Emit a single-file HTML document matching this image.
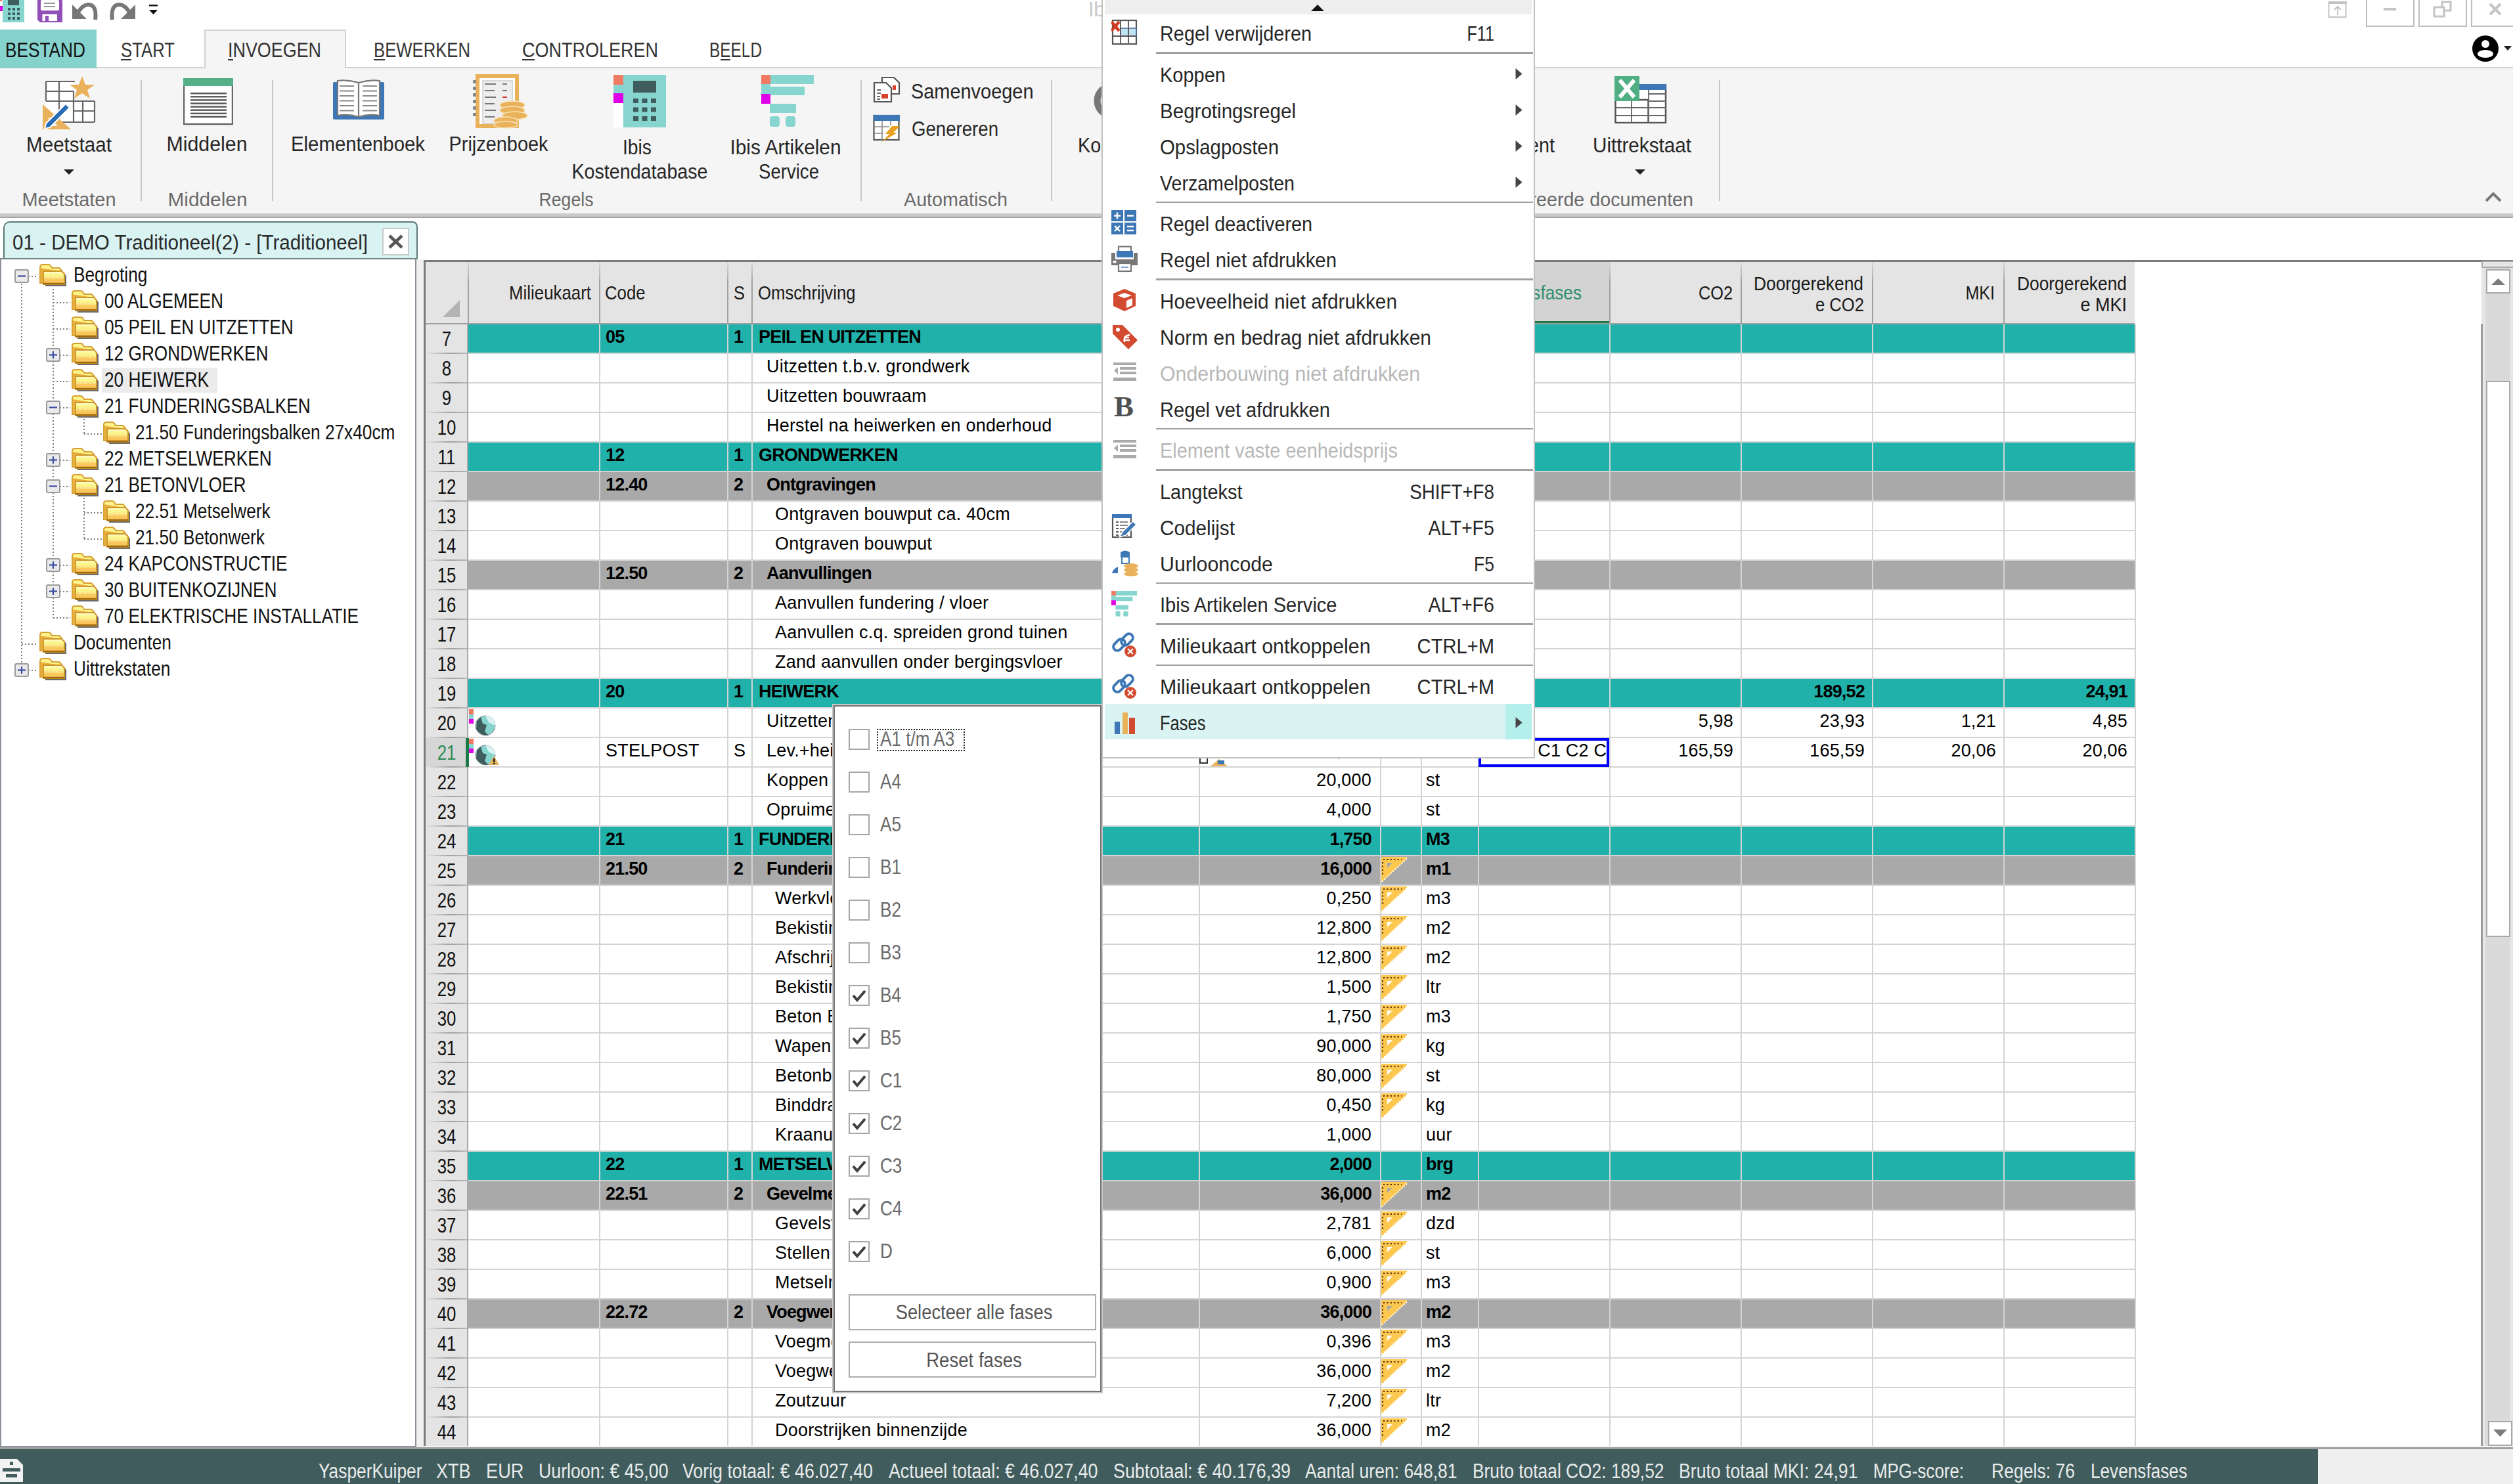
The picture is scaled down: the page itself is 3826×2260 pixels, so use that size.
<!DOCTYPE html>
<html><head><meta charset="utf-8"><title>Ibis</title>
<style>
html,body{margin:0;padding:0;background:#fff;overflow:hidden;}
body{width:3826px;height:2260px;position:relative;font-family:"Liberation Sans", sans-serif;}
#app{position:absolute;left:0;top:0;width:3826px;height:2260px;overflow:hidden;}
#app div{position:absolute;}
</style></head><body><div id="app">
<div style="left:0px;top:0px;width:3826px;height:45px;background:#ffffff;"></div>
<svg style="position:absolute;left:0px;top:0px;" width="40" height="36" viewBox="0 0 40 36"><rect x="0" y="0" width="3" height="2" fill="#f07a62"/><rect x="0" y="9" width="4" height="8" fill="#e000e8"/><rect x="4" y="0" width="33" height="34" fill="#86d5cf"/><rect x="12" y="0" width="17" height="8" fill="#3f5d5d"/><rect x="12" y="12" width="4" height="4" fill="#3f5d5d"/><rect x="19" y="12" width="4" height="4" fill="#3f5d5d"/><rect x="26" y="12" width="4" height="4" fill="#3f5d5d"/><rect x="12" y="19" width="4" height="4" fill="#3f5d5d"/><rect x="19" y="19" width="4" height="4" fill="#3f5d5d"/><rect x="26" y="19" width="4" height="4" fill="#3f5d5d"/><rect x="12" y="26" width="4" height="4" fill="#3f5d5d"/><rect x="19" y="26" width="4" height="4" fill="#3f5d5d"/><rect x="26" y="26" width="4" height="4" fill="#3f5d5d"/></svg>
<svg style="position:absolute;left:56px;top:0px;" width="40" height="36" viewBox="0 0 40 36"><path d="M1 0 H39 V34 H5 L1 30 Z" fill="#9050b8"/><rect x="6" y="0" width="28" height="16" rx="2" fill="#fff"/><rect x="11" y="4" width="17" height="2" fill="#999"/><rect x="11" y="9" width="17" height="2" fill="#999"/><rect x="8.5" y="21.5" width="22.5" height="10.5" fill="#fff"/><rect x="13" y="24" width="5" height="8" fill="#9050b8"/></svg>
<svg style="position:absolute;left:108px;top:4px;" width="44" height="28" viewBox="0 0 44 28"><path d="M2 3 L2 25 L24 25 Z" fill="#777"/><path d="M37 26 Q40 3 26 3 Q18 3 10 16" fill="none" stroke="#777" stroke-width="6"/></svg>
<svg style="position:absolute;left:164px;top:4px;" width="44" height="28" viewBox="0 0 44 28"><path d="M42 3 L42 25 L20 25 Z" fill="#777"/><path d="M7 26 Q4 3 18 3 Q26 3 34 16" fill="none" stroke="#777" stroke-width="6"/></svg>
<svg style="position:absolute;left:224px;top:6px;" width="18" height="18" viewBox="0 0 18 18"><rect x="3" y="1" width="13" height="2.5" fill="#111"/><path d="M3 9 H16 L9.5 16 Z" fill="#111"/></svg>
<div style="top:-1.25px;font-size:31.0px;line-height:31.0px;color:#c8c8c8;white-space:nowrap;left:1657px;transform:scaleX(0.967741935483871);transform-origin:0 0;">Ibis Begroting</div>
<svg style="position:absolute;left:3544px;top:1px;" width="30" height="27" viewBox="0 0 30 27"><rect x="1.5" y="2" width="26" height="23" fill="none" stroke="#c4c4c4" stroke-width="2"/><rect x="1" y="1" width="28" height="4" fill="#c4c4c4"/><path d="M15 22 V9 M10 14 L15 9 L20 14" fill="none" stroke="#c4c4c4" stroke-width="2"/></svg>
<div style="left:3602px;top:-4px;width:74px;height:45px;border:2.5px solid #bdbdbd;box-sizing:border-box;background:#fff;"></div>
<div style="left:3682px;top:-4px;width:74px;height:45px;border:2.5px solid #bdbdbd;box-sizing:border-box;background:#fff;"></div>
<div style="left:3762px;top:-4px;width:74px;height:45px;border:2.5px solid #bdbdbd;box-sizing:border-box;background:#fff;"></div>
<div style="left:3629px;top:12px;width:19px;height:4px;background:#c4c4c4;"></div>
<svg style="position:absolute;left:3704px;top:0px;" width="30" height="28" viewBox="0 0 30 28"><rect x="14" y="3" width="13" height="13" fill="none" stroke="#c4c4c4" stroke-width="3"/><rect x="2" y="11" width="15" height="14" fill="#fff" stroke="#c4c4c4" stroke-width="3"/></svg>
<svg style="position:absolute;left:3788px;top:3px;" width="22" height="22" viewBox="0 0 22 22"><path d="M3 3 L19 19 M19 3 L3 19" stroke="#c4c4c4" stroke-width="4"/></svg>
<svg style="position:absolute;left:3762px;top:52px;" width="64" height="44" viewBox="0 0 64 44"><circle cx="22" cy="22" r="20" fill="#000"/><circle cx="22" cy="15" r="6" fill="#fff"/><ellipse cx="22" cy="30" rx="12" ry="6" fill="#fff"/><path d="M50 18 H62 L56 25 Z" fill="#222"/></svg>
<div style="left:0px;top:45px;width:147px;height:59px;background:#86d3cd;"></div>
<div style="top:60.75px;font-size:31.0px;line-height:31.0px;color:#111;white-space:nowrap;left:8px;transform:scaleX(0.8464970600814514);transform-origin:0 0;">BESTAND</div>
<div style="left:147px;top:102px;width:3679px;height:2px;background:#d2d2d2;"></div>
<div style="left:311px;top:45px;width:216px;height:59px;background:#f5f5f5;border:2px solid #d2d2d2;border-bottom:none;box-sizing:border-box;"></div>
<div style="top:60.75px;font-size:31.0px;line-height:31.0px;color:#333;white-space:nowrap;left:184px;transform:scaleX(0.830322596466857);transform-origin:0 0;">START</div>
<div style="top:60.75px;font-size:31.0px;line-height:31.0px;color:#333;white-space:nowrap;left:347px;transform:scaleX(0.867726181212315);transform-origin:0 0;">INVOEGEN</div>
<div style="top:60.75px;font-size:31.0px;line-height:31.0px;color:#333;white-space:nowrap;left:569px;transform:scaleX(0.8285231056054325);transform-origin:0 0;">BEWERKEN</div>
<div style="top:60.75px;font-size:31.0px;line-height:31.0px;color:#333;white-space:nowrap;left:795px;transform:scaleX(0.8708553353364935);transform-origin:0 0;">CONTROLEREN</div>
<div style="top:60.75px;font-size:31.0px;line-height:31.0px;color:#333;white-space:nowrap;left:1080px;transform:scaleX(0.7869132635613819);transform-origin:0 0;">BEELD</div>
<div style="left:184px;top:90px;width:16px;height:2px;background:#333;"></div>
<div style="left:347px;top:90px;width:8px;height:2px;background:#333;"></div>
<div style="left:569px;top:90px;width:17px;height:2px;background:#333;"></div>
<div style="left:795px;top:90px;width:19px;height:2px;background:#333;"></div>
<div style="left:1097px;top:90px;width:15px;height:2px;background:#333;"></div>
<div style="left:0px;top:104px;width:3826px;height:221px;background:#f5f5f5;"></div>
<div style="left:0px;top:325px;width:3826px;height:5px;background:#c9c9c9;"></div>
<div style="left:0px;top:330px;width:3826px;height:2px;background:#a3a3a3;"></div>
<div style="left:214px;top:122px;width:2px;height:184px;background:#c6c6c6;"></div>
<div style="left:414px;top:122px;width:2px;height:184px;background:#c6c6c6;"></div>
<div style="left:1310px;top:122px;width:2px;height:184px;background:#c6c6c6;"></div>
<div style="left:1600px;top:122px;width:2px;height:184px;background:#c6c6c6;"></div>
<div style="left:2617px;top:122px;width:2px;height:184px;background:#c6c6c6;"></div>
<svg style="position:absolute;left:64px;top:116px;" width="82" height="82" viewBox="0 0 82 82"><rect x="6" y="8" width="44" height="62" fill="#fff"/><rect x="6" y="38" width="74" height="32" fill="#fff"/>
<path d="M6 8 H50 M6 23 H48 M6 38 H48 M6 38 V8 M26 8 V70 M48 23 V70 M62 38 V70 M80 38 V70 M48 53 H80 M26 70 H80 M48 38 H80" stroke="#666" stroke-width="2.2" fill="none"/>
<path d="M61 0 L66 13 L80 13 L69 21 L73 34 L61 26 L49 34 L53 21 L42 13 L56 13 Z" fill="#e9b15a"/>
<path d="M1 43 L1 81 L44 81 Z" fill="#e9b15a"/><path d="M10 62 L10 76 L24 76 Z" fill="#f4f4f4"/>
<path d="M6 72 L36 42 L42 48 L12 78 L4 80 Z" fill="#2a6bb5" stroke="#fff" stroke-width="2"/></svg>
<div style="top:204.75px;font-size:31.0px;line-height:31.0px;color:#262626;white-space:nowrap;left:-1395px;width:3000px;text-align:center;transform:scaleX(0.9549952738064426);transform-origin:50% 0;">Meetstaat</div>
<svg style="position:absolute;left:97px;top:258px;" width="16" height="9" viewBox="0 0 16 9"><path d="M0 0 H16 L8 8 Z" fill="#222"/></svg>
<svg style="position:absolute;left:279px;top:119px;" width="76" height="72" viewBox="0 0 76 72"><rect x="1" y="1" width="74" height="69" fill="#fff" stroke="#666" stroke-width="2.5"/><rect x="0" y="0" width="76" height="12" fill="#55b08a"/><rect x="11" y="22.0" width="55" height="2.4" fill="#555"/><rect x="11" y="27.1" width="55" height="2.4" fill="#555"/><rect x="11" y="32.2" width="55" height="2.4" fill="#555"/><rect x="11" y="37.3" width="55" height="2.4" fill="#555"/><rect x="11" y="42.4" width="55" height="2.4" fill="#555"/><rect x="11" y="47.5" width="55" height="2.4" fill="#555"/><rect x="11" y="52.6" width="55" height="2.4" fill="#555"/><rect x="11" y="57.7" width="55" height="2.4" fill="#555"/></svg>
<div style="top:203.75px;font-size:31.0px;line-height:31.0px;color:#262626;white-space:nowrap;left:-1185.5px;width:3000px;text-align:center;transform:scaleX(0.9776902316673767);transform-origin:50% 0;">Middelen</div>
<svg style="position:absolute;left:506px;top:120px;" width="80" height="64" viewBox="0 0 80 64"><rect x="1" y="5" width="78" height="57" rx="2" fill="#3d77b6"/><path d="M8 3 Q24 1 40 6 Q56 1 72 3 V56 Q56 53 40 58 Q24 53 8 56 Z" fill="#fff" stroke="#777" stroke-width="2.2"/><path d="M40 6 V58" stroke="#777" stroke-width="2.2"/><rect x="11" y="10.0" width="22" height="2" fill="#888"/><rect x="46" y="10.0" width="22" height="2" fill="#888"/><rect x="11" y="17.5" width="22" height="2" fill="#888"/><rect x="46" y="17.5" width="22" height="2" fill="#888"/><rect x="11" y="25.0" width="22" height="2" fill="#888"/><rect x="46" y="25.0" width="22" height="2" fill="#888"/><rect x="11" y="32.5" width="22" height="2" fill="#888"/><rect x="46" y="32.5" width="22" height="2" fill="#888"/><rect x="11" y="40.0" width="22" height="2" fill="#888"/><rect x="46" y="40.0" width="22" height="2" fill="#888"/><rect x="11" y="47.5" width="22" height="2" fill="#888"/><rect x="46" y="47.5" width="22" height="2" fill="#888"/></svg>
<div style="top:203.75px;font-size:31.0px;line-height:31.0px;color:#262626;white-space:nowrap;left:-955.5px;width:3000px;text-align:center;transform:scaleX(0.946929930013784);transform-origin:50% 0;">Elementenboek</div>
<svg style="position:absolute;left:718px;top:112px;" width="86" height="84" viewBox="0 0 86 84"><rect x="9" y="4" width="60" height="76" fill="#fff" stroke="#e9b15a" stroke-width="6"/>
<rect x="17" y="11" width="45" height="65" fill="#eee" stroke="#ccc" stroke-width="1.5"/>
<rect x="20" y="15" width="17" height="2" fill="#777"/><rect x="47" y="15" width="7" height="2" fill="#777"/><rect x="20" y="25" width="15" height="2" fill="#777"/><rect x="47" y="25" width="7" height="2" fill="#777"/><rect x="20" y="35" width="17" height="2" fill="#777"/><rect x="47" y="35" width="7" height="2" fill="#d33"/><rect x="20" y="45" width="15" height="2" fill="#777"/><rect x="47" y="45" width="7" height="2" fill="#777"/><rect x="20" y="55" width="17" height="2" fill="#777"/><rect x="47" y="55" width="7" height="2" fill="#777"/><rect x="20" y="65" width="15" height="2" fill="#777"/><rect x="47" y="65" width="7" height="2" fill="#777"/><rect x="2" y="10" width="5" height="5" fill="#888"/><rect x="2" y="20" width="5" height="5" fill="#888"/><rect x="2" y="30" width="5" height="5" fill="#888"/><rect x="2" y="40" width="5" height="5" fill="#888"/><rect x="2" y="50" width="5" height="5" fill="#888"/><rect x="2" y="60" width="5" height="5" fill="#888"/>
<ellipse cx="62" cy="48" rx="19" ry="6" fill="#e9b15a" stroke="#f8e3b8" stroke-width="1.5"/><ellipse cx="62" cy="56" rx="19" ry="6" fill="#e9b15a" stroke="#f8e3b8" stroke-width="1.5"/><ellipse cx="66" cy="64" rx="19" ry="6" fill="#e9b15a" stroke="#f8e3b8" stroke-width="1.5"/><ellipse cx="52" cy="72" rx="18" ry="6" fill="#e9b15a" stroke="#f8e3b8" stroke-width="1.5"/><ellipse cx="52" cy="78" rx="18" ry="5" fill="#e9b15a" stroke="#f8e3b8" stroke-width="1.5"/></svg>
<div style="top:203.75px;font-size:31.0px;line-height:31.0px;color:#262626;white-space:nowrap;left:-741.5px;width:3000px;text-align:center;transform:scaleX(0.9321868772318371);transform-origin:50% 0;">Prijzenboek</div>
<svg style="position:absolute;left:934px;top:114px;" width="80" height="80" viewBox="0 0 80 80"><rect x="0" y="0" width="15" height="15" fill="#f07a62"/><rect x="0" y="15" width="15" height="13" fill="#86d5cf"/><rect x="0" y="28" width="15" height="15" fill="#e000e8"/><rect x="0" y="43" width="15" height="37" fill="#fff"/><rect x="15" y="0" width="65" height="80" fill="#86d5cf"/><rect x="30" y="9" width="35" height="18" fill="#3f5d5d"/><rect x="30.0" y="36.0" width="8" height="7" fill="#3f5d5d"/><rect x="43.5" y="36.0" width="8" height="7" fill="#3f5d5d"/><rect x="57.0" y="36.0" width="8" height="7" fill="#3f5d5d"/><rect x="30.0" y="49.5" width="8" height="7" fill="#3f5d5d"/><rect x="43.5" y="49.5" width="8" height="7" fill="#3f5d5d"/><rect x="57.0" y="49.5" width="8" height="7" fill="#3f5d5d"/><rect x="30.0" y="63.0" width="8" height="7" fill="#3f5d5d"/><rect x="43.5" y="63.0" width="8" height="7" fill="#3f5d5d"/><rect x="57.0" y="63.0" width="8" height="7" fill="#3f5d5d"/></svg>
<div style="top:208.75px;font-size:31.0px;line-height:31.0px;color:#262626;white-space:nowrap;left:-530px;width:3000px;text-align:center;transform:scaleX(0.9120810249251403);transform-origin:50% 0;">Ibis</div>
<div style="top:245.75px;font-size:31.0px;line-height:31.0px;color:#262626;white-space:nowrap;left:-526.5px;width:3000px;text-align:center;transform:scaleX(0.9238007343406955);transform-origin:50% 0;">Kostendatabase</div>
<svg style="position:absolute;left:1159px;top:114px;" width="81" height="81" viewBox="0 0 81 81"><g transform="scale(1.0)"><rect x="13" y="0" width="67" height="14" fill="#86d5cf"/><rect x="0" y="0" width="14" height="14" fill="#f07a62"/><rect x="0" y="14" width="14" height="15" fill="#86d5cf"/><rect x="13" y="18" width="53" height="13" fill="#86d5cf"/><rect x="0" y="29" width="14" height="15" fill="#e000e8"/><rect x="13" y="44" width="40" height="14" fill="#86d5cf"/><rect x="13" y="63" width="15" height="16" rx="4" fill="#86d5cf"/><rect x="37" y="63" width="15" height="16" rx="4" fill="#86d5cf"/></g></svg>
<div style="top:208.75px;font-size:31.0px;line-height:31.0px;color:#262626;white-space:nowrap;left:-304px;width:3000px;text-align:center;transform:scaleX(0.9615500015335372);transform-origin:50% 0;">Ibis Artikelen</div>
<div style="top:245.75px;font-size:31.0px;line-height:31.0px;color:#262626;white-space:nowrap;left:-299px;width:3000px;text-align:center;transform:scaleX(0.8899818844550184);transform-origin:50% 0;">Service</div>
<svg style="position:absolute;left:1329px;top:116px;" width="42" height="42" viewBox="0 0 42 42"><path d="M14 2 H32 L40 10 V27 H14 Z" fill="#fff" stroke="#555" stroke-width="2.2"/><rect x="30" y="14" width="5" height="7" fill="#d84030"/><path d="M2 10 H20 L28 18 V39 H2 Z" fill="#fff" stroke="#555" stroke-width="2.2"/><rect x="6" y="20" width="6" height="2" fill="#666"/><rect x="6" y="25" width="6" height="2" fill="#666"/><rect x="6" y="30" width="5" height="2" fill="#666"/><rect x="6" y="34" width="5" height="2" fill="#666"/><rect x="13" y="27" width="10" height="7" fill="#d84030"/></svg>
<div style="top:123.75px;font-size:31.0px;line-height:31.0px;color:#262626;white-space:nowrap;left:1387px;transform:scaleX(0.9328122734837404);transform-origin:0 0;">Samenvoegen</div>
<svg style="position:absolute;left:1329px;top:174px;" width="42" height="42" viewBox="0 0 42 42"><rect x="1.5" y="2" width="38" height="37" fill="#fff" stroke="#555" stroke-width="2.2"/><rect x="1" y="1" width="40" height="9" fill="#3d77b6"/><path d="M1.5 19 H25 M1.5 29 H15 M14 10 V39 M27 10 V17" stroke="#888" stroke-width="1.6"/><path d="M29 18 L41 18 L31 28 L37 28 L14 42 L25 30 L19 30 Z" fill="#e8a020"/></svg>
<div style="top:180.75px;font-size:31.0px;line-height:31.0px;color:#262626;white-space:nowrap;left:1388px;transform:scaleX(0.8906337964319828);transform-origin:0 0;">Genereren</div>
<svg style="position:absolute;left:1664px;top:124px;" width="60" height="60" viewBox="0 0 60 60"><circle cx="29" cy="29.5" r="22.5" fill="none" stroke="#777" stroke-width="10"/></svg>
<div style="top:205.75px;font-size:31.0px;line-height:31.0px;color:#262626;white-space:nowrap;left:1641px;transform:scaleX(0.9290322580645161);transform-origin:0 0;">Koppelen</div>
<div style="top:288.60px;font-size:30.0px;line-height:30.0px;color:#6a6a6a;white-space:nowrap;left:-1395.5px;width:3000px;text-align:center;transform:scaleX(0.9634799818926403);transform-origin:50% 0;">Meetstaten</div>
<div style="top:288.60px;font-size:30.0px;line-height:30.0px;color:#6a6a6a;white-space:nowrap;left:-1184.5px;width:3000px;text-align:center;transform:scaleX(0.9938525905106586);transform-origin:50% 0;">Middelen</div>
<div style="top:288.60px;font-size:30.0px;line-height:30.0px;color:#6a6a6a;white-space:nowrap;left:-638.5px;width:3000px;text-align:center;transform:scaleX(0.8887773455473292);transform-origin:50% 0;">Regels</div>
<div style="top:288.60px;font-size:30.0px;line-height:30.0px;color:#6a6a6a;white-space:nowrap;left:-45.5px;width:3000px;text-align:center;transform:scaleX(0.9571271042456424);transform-origin:50% 0;">Automatisch</div>
<div style="top:288.60px;font-size:30.0px;line-height:30.0px;color:#6a6a6a;white-space:nowrap;left:-422px;width:3000px;text-align:right;transform:scaleX(0.9552805543325185);transform-origin:100% 0;">Gegenereerde documenten</div>
<div style="top:205.75px;font-size:31.0px;line-height:31.0px;color:#262626;white-space:nowrap;left:-633px;width:3000px;text-align:right;transform:scaleX(0.9290322580645161);transform-origin:100% 0;">Document</div>
<svg style="position:absolute;left:2458px;top:116px;" width="80" height="72" viewBox="0 0 80 72"><rect x="28" y="14" width="50" height="57" fill="#fff" stroke="#555" stroke-width="2.5"/><rect x="28" y="12" width="51" height="9" fill="#3d77b6"/><rect x="1.5" y="36" width="50" height="35" fill="#fff" stroke="#555" stroke-width="2.5"/><path d="M1.5 48 H78 M1.5 60 H78 M26 36 V71 M52 21 V71 M52 27 H78 M52 38 H78" stroke="#666" stroke-width="1.8"/><rect x="0" y="0" width="38" height="38" fill="#4fae82"/><path d="M8 6 L30 32 M30 6 L8 32" stroke="#fff" stroke-width="6"/></svg>
<div style="top:205.75px;font-size:31.0px;line-height:31.0px;color:#262626;white-space:nowrap;left:999.5px;width:3000px;text-align:center;transform:scaleX(0.956798552044858);transform-origin:50% 0;">Uittrekstaat</div>
<svg style="position:absolute;left:2489px;top:258px;" width="16" height="9" viewBox="0 0 16 9"><path d="M0 0 H16 L8 8 Z" fill="#222"/></svg>
<svg style="position:absolute;left:3783px;top:292px;" width="26" height="16" viewBox="0 0 26 16"><path d="M2 14 L13 3 L24 14" fill="none" stroke="#777" stroke-width="4"/></svg>
<div style="left:0px;top:332px;width:3826px;height:66px;background:#ffffff;"></div>
<div style="left:5px;top:337px;width:631px;height:59px;background:#d9f3f3;border:2px solid #5d7777;border-bottom:none;border-radius:10px 8px 0 0;box-sizing:border-box;"></div>
<div style="top:353.75px;font-size:31.0px;line-height:31.0px;color:#2a2a2a;white-space:nowrap;left:19px;transform:scaleX(0.9534406018263356);transform-origin:0 0;">01 - DEMO Traditioneel(2) - [Traditioneel]</div>
<div style="left:582px;top:347px;width:41px;height:42px;background:#fff;border:2px solid #c9c9c9;box-sizing:border-box;"></div>
<svg style="position:absolute;left:590px;top:356px;" width="25" height="24" viewBox="0 0 25 24"><path d="M3 3 L22 21 M22 3 L3 21" stroke="#555" stroke-width="4.5"/></svg>
<div style="left:0px;top:393px;width:636px;height:2px;background:#6d8585;"></div>
<div style="left:0px;top:395px;width:634px;height:1809px;background:#ffffff;border:2px solid #8c919b;border-top:none;box-sizing:border-box;"></div>
<div style="left:634px;top:395px;width:11px;height:1809px;background:#f0f0f0;"></div>
<svg width="0" height="0" style="position:absolute"><defs><linearGradient id="fg" x1="0" y1="0" x2="0" y2="1"><stop offset="0" stop-color="#fffbe0"/><stop offset="0.25" stop-color="#fbf78e"/><stop offset="0.55" stop-color="#f9ec80"/><stop offset="0.6" stop-color="#fbc860"/><stop offset="1" stop-color="#f8c458"/></linearGradient></defs></svg>
<div style="left:32px;top:432px;width:2px;height:578px;background-image:linear-gradient(#7a7a7a 50%, transparent 50%);background-size:2px 5px;"></div>
<div style="left:80px;top:440px;width:2px;height:501px;background-image:linear-gradient(#7a7a7a 50%, transparent 50%);background-size:2px 5px;"></div>
<div style="left:127px;top:638px;width:2px;height:23px;background-image:linear-gradient(#7a7a7a 50%, transparent 50%);background-size:2px 5px;"></div>
<div style="left:127px;top:758px;width:2px;height:63px;background-image:linear-gradient(#7a7a7a 50%, transparent 50%);background-size:2px 5px;"></div>
<div style="left:33px;top:420px;width:25px;height:2px;background-image:linear-gradient(90deg,#7a7a7a 50%, transparent 50%);background-size:5px 2px;"></div>
<svg style="position:absolute;left:22px;top:410px;" width="22" height="22" viewBox="0 0 22 22"><rect x="1" y="1" width="20" height="19" rx="2" fill="#eaeaea" stroke="#9a9a9a" stroke-width="2"/><path d="M5 10.5 H17" stroke="#3a4ea0" stroke-width="2.2"/></svg>
<svg style="position:absolute;left:59px;top:401px;" width="44" height="36" viewBox="0 0 44 36"><path d="M10 15 H38 L42 19 V35 H10 Z" fill="#5a5a5a" opacity="0.9"/><path d="M2 6 Q2 2 6 2 H15 Q17 2 19 5 L20 7 H31 L35 11 V30 H2 Z" fill="#fcf48a" stroke="#d8a030" stroke-width="2"/><path d="M2 7 V30 H8 V12 H33" fill="#eab040" stroke="#d8a030" stroke-width="1.5"/><path d="M7 12 H35 L39 16 V32 H7 Z" fill="url(#fg)" stroke="#cf9628" stroke-width="2"/><path d="M7 31 H39" stroke="#a06a10" stroke-width="2.5"/><path d="M10 22 H36" stroke="#ffc8a0" stroke-width="1.6" stroke-dasharray="3 4"/></svg>
<div style="top:402.57px;font-size:31.8px;line-height:31.8px;color:#111;white-space:nowrap;left:112px;transform:scaleX(0.8254716981132075);transform-origin:0 0;">Begroting</div>
<div style="left:81px;top:460px;width:26px;height:2px;background-image:linear-gradient(90deg,#7a7a7a 50%, transparent 50%);background-size:5px 2px;"></div>
<svg style="position:absolute;left:108px;top:441px;" width="44" height="36" viewBox="0 0 44 36"><path d="M10 15 H38 L42 19 V35 H10 Z" fill="#5a5a5a" opacity="0.9"/><path d="M2 6 Q2 2 6 2 H15 Q17 2 19 5 L20 7 H31 L35 11 V30 H2 Z" fill="#fcf48a" stroke="#d8a030" stroke-width="2"/><path d="M2 7 V30 H8 V12 H33" fill="#eab040" stroke="#d8a030" stroke-width="1.5"/><path d="M7 12 H35 L39 16 V32 H7 Z" fill="url(#fg)" stroke="#cf9628" stroke-width="2"/><path d="M7 31 H39" stroke="#a06a10" stroke-width="2.5"/><path d="M10 22 H36" stroke="#ffc8a0" stroke-width="1.6" stroke-dasharray="3 4"/></svg>
<div style="top:442.57px;font-size:31.8px;line-height:31.8px;color:#111;white-space:nowrap;left:159px;transform:scaleX(0.8254716981132075);transform-origin:0 0;">00 ALGEMEEN</div>
<div style="left:81px;top:500px;width:26px;height:2px;background-image:linear-gradient(90deg,#7a7a7a 50%, transparent 50%);background-size:5px 2px;"></div>
<svg style="position:absolute;left:108px;top:481px;" width="44" height="36" viewBox="0 0 44 36"><path d="M10 15 H38 L42 19 V35 H10 Z" fill="#5a5a5a" opacity="0.9"/><path d="M2 6 Q2 2 6 2 H15 Q17 2 19 5 L20 7 H31 L35 11 V30 H2 Z" fill="#fcf48a" stroke="#d8a030" stroke-width="2"/><path d="M2 7 V30 H8 V12 H33" fill="#eab040" stroke="#d8a030" stroke-width="1.5"/><path d="M7 12 H35 L39 16 V32 H7 Z" fill="url(#fg)" stroke="#cf9628" stroke-width="2"/><path d="M7 31 H39" stroke="#a06a10" stroke-width="2.5"/><path d="M10 22 H36" stroke="#ffc8a0" stroke-width="1.6" stroke-dasharray="3 4"/></svg>
<div style="top:482.57px;font-size:31.8px;line-height:31.8px;color:#111;white-space:nowrap;left:159px;transform:scaleX(0.8254716981132075);transform-origin:0 0;">05 PEIL EN UITZETTEN</div>
<div style="left:81px;top:540px;width:26px;height:2px;background-image:linear-gradient(90deg,#7a7a7a 50%, transparent 50%);background-size:5px 2px;"></div>
<svg style="position:absolute;left:70px;top:530px;" width="22" height="22" viewBox="0 0 22 22"><rect x="1" y="1" width="20" height="19" rx="2" fill="#eaeaea" stroke="#9a9a9a" stroke-width="2"/><path d="M5 10.5 H17" stroke="#3a4ea0" stroke-width="2.2"/><path d="M11 5 V16" stroke="#3a4ea0" stroke-width="2.2"/></svg>
<svg style="position:absolute;left:108px;top:521px;" width="44" height="36" viewBox="0 0 44 36"><path d="M10 15 H38 L42 19 V35 H10 Z" fill="#5a5a5a" opacity="0.9"/><path d="M2 6 Q2 2 6 2 H15 Q17 2 19 5 L20 7 H31 L35 11 V30 H2 Z" fill="#fcf48a" stroke="#d8a030" stroke-width="2"/><path d="M2 7 V30 H8 V12 H33" fill="#eab040" stroke="#d8a030" stroke-width="1.5"/><path d="M7 12 H35 L39 16 V32 H7 Z" fill="url(#fg)" stroke="#cf9628" stroke-width="2"/><path d="M7 31 H39" stroke="#a06a10" stroke-width="2.5"/><path d="M10 22 H36" stroke="#ffc8a0" stroke-width="1.6" stroke-dasharray="3 4"/></svg>
<div style="top:522.57px;font-size:31.8px;line-height:31.8px;color:#111;white-space:nowrap;left:159px;transform:scaleX(0.8254716981132075);transform-origin:0 0;">12 GRONDWERKEN</div>
<div style="left:81px;top:580px;width:26px;height:2px;background-image:linear-gradient(90deg,#7a7a7a 50%, transparent 50%);background-size:5px 2px;"></div>
<div style="left:155px;top:560px;width:176px;height:38px;background:#ebebeb;"></div>
<svg style="position:absolute;left:108px;top:561px;" width="44" height="36" viewBox="0 0 44 36"><path d="M10 15 H38 L42 19 V35 H10 Z" fill="#5a5a5a" opacity="0.9"/><path d="M2 6 Q2 2 6 2 H15 Q17 2 19 5 L20 7 H31 L35 11 V30 H2 Z" fill="#fcf48a" stroke="#d8a030" stroke-width="2"/><path d="M2 7 V30 H8 V12 H33" fill="#eab040" stroke="#d8a030" stroke-width="1.5"/><path d="M7 12 H35 L39 16 V32 H7 Z" fill="url(#fg)" stroke="#cf9628" stroke-width="2"/><path d="M7 31 H39" stroke="#a06a10" stroke-width="2.5"/><path d="M10 22 H36" stroke="#ffc8a0" stroke-width="1.6" stroke-dasharray="3 4"/></svg>
<div style="top:562.57px;font-size:31.8px;line-height:31.8px;color:#111;white-space:nowrap;left:159px;transform:scaleX(0.8254716981132075);transform-origin:0 0;">20 HEIWERK</div>
<div style="left:81px;top:620px;width:26px;height:2px;background-image:linear-gradient(90deg,#7a7a7a 50%, transparent 50%);background-size:5px 2px;"></div>
<svg style="position:absolute;left:70px;top:610px;" width="22" height="22" viewBox="0 0 22 22"><rect x="1" y="1" width="20" height="19" rx="2" fill="#eaeaea" stroke="#9a9a9a" stroke-width="2"/><path d="M5 10.5 H17" stroke="#3a4ea0" stroke-width="2.2"/></svg>
<svg style="position:absolute;left:108px;top:601px;" width="44" height="36" viewBox="0 0 44 36"><path d="M10 15 H38 L42 19 V35 H10 Z" fill="#5a5a5a" opacity="0.9"/><path d="M2 6 Q2 2 6 2 H15 Q17 2 19 5 L20 7 H31 L35 11 V30 H2 Z" fill="#fcf48a" stroke="#d8a030" stroke-width="2"/><path d="M2 7 V30 H8 V12 H33" fill="#eab040" stroke="#d8a030" stroke-width="1.5"/><path d="M7 12 H35 L39 16 V32 H7 Z" fill="url(#fg)" stroke="#cf9628" stroke-width="2"/><path d="M7 31 H39" stroke="#a06a10" stroke-width="2.5"/><path d="M10 22 H36" stroke="#ffc8a0" stroke-width="1.6" stroke-dasharray="3 4"/></svg>
<div style="top:602.57px;font-size:31.8px;line-height:31.8px;color:#111;white-space:nowrap;left:159px;transform:scaleX(0.8254716981132075);transform-origin:0 0;">21 FUNDERINGSBALKEN</div>
<div style="left:128px;top:660px;width:27px;height:2px;background-image:linear-gradient(90deg,#7a7a7a 50%, transparent 50%);background-size:5px 2px;"></div>
<svg style="position:absolute;left:156px;top:641px;" width="44" height="36" viewBox="0 0 44 36"><path d="M10 15 H38 L42 19 V35 H10 Z" fill="#5a5a5a" opacity="0.9"/><path d="M2 6 Q2 2 6 2 H15 Q17 2 19 5 L20 7 H31 L35 11 V30 H2 Z" fill="#fcf48a" stroke="#d8a030" stroke-width="2"/><path d="M2 7 V30 H8 V12 H33" fill="#eab040" stroke="#d8a030" stroke-width="1.5"/><path d="M7 12 H35 L39 16 V32 H7 Z" fill="url(#fg)" stroke="#cf9628" stroke-width="2"/><path d="M7 31 H39" stroke="#a06a10" stroke-width="2.5"/><path d="M10 22 H36" stroke="#ffc8a0" stroke-width="1.6" stroke-dasharray="3 4"/></svg>
<div style="top:642.57px;font-size:31.8px;line-height:31.8px;color:#111;white-space:nowrap;left:206px;transform:scaleX(0.8254716981132075);transform-origin:0 0;">21.50 Funderingsbalken 27x40cm</div>
<div style="left:81px;top:700px;width:26px;height:2px;background-image:linear-gradient(90deg,#7a7a7a 50%, transparent 50%);background-size:5px 2px;"></div>
<svg style="position:absolute;left:70px;top:690px;" width="22" height="22" viewBox="0 0 22 22"><rect x="1" y="1" width="20" height="19" rx="2" fill="#eaeaea" stroke="#9a9a9a" stroke-width="2"/><path d="M5 10.5 H17" stroke="#3a4ea0" stroke-width="2.2"/><path d="M11 5 V16" stroke="#3a4ea0" stroke-width="2.2"/></svg>
<svg style="position:absolute;left:108px;top:681px;" width="44" height="36" viewBox="0 0 44 36"><path d="M10 15 H38 L42 19 V35 H10 Z" fill="#5a5a5a" opacity="0.9"/><path d="M2 6 Q2 2 6 2 H15 Q17 2 19 5 L20 7 H31 L35 11 V30 H2 Z" fill="#fcf48a" stroke="#d8a030" stroke-width="2"/><path d="M2 7 V30 H8 V12 H33" fill="#eab040" stroke="#d8a030" stroke-width="1.5"/><path d="M7 12 H35 L39 16 V32 H7 Z" fill="url(#fg)" stroke="#cf9628" stroke-width="2"/><path d="M7 31 H39" stroke="#a06a10" stroke-width="2.5"/><path d="M10 22 H36" stroke="#ffc8a0" stroke-width="1.6" stroke-dasharray="3 4"/></svg>
<div style="top:682.57px;font-size:31.8px;line-height:31.8px;color:#111;white-space:nowrap;left:159px;transform:scaleX(0.8254716981132075);transform-origin:0 0;">22 METSELWERKEN</div>
<div style="left:81px;top:740px;width:26px;height:2px;background-image:linear-gradient(90deg,#7a7a7a 50%, transparent 50%);background-size:5px 2px;"></div>
<svg style="position:absolute;left:70px;top:730px;" width="22" height="22" viewBox="0 0 22 22"><rect x="1" y="1" width="20" height="19" rx="2" fill="#eaeaea" stroke="#9a9a9a" stroke-width="2"/><path d="M5 10.5 H17" stroke="#3a4ea0" stroke-width="2.2"/></svg>
<svg style="position:absolute;left:108px;top:721px;" width="44" height="36" viewBox="0 0 44 36"><path d="M10 15 H38 L42 19 V35 H10 Z" fill="#5a5a5a" opacity="0.9"/><path d="M2 6 Q2 2 6 2 H15 Q17 2 19 5 L20 7 H31 L35 11 V30 H2 Z" fill="#fcf48a" stroke="#d8a030" stroke-width="2"/><path d="M2 7 V30 H8 V12 H33" fill="#eab040" stroke="#d8a030" stroke-width="1.5"/><path d="M7 12 H35 L39 16 V32 H7 Z" fill="url(#fg)" stroke="#cf9628" stroke-width="2"/><path d="M7 31 H39" stroke="#a06a10" stroke-width="2.5"/><path d="M10 22 H36" stroke="#ffc8a0" stroke-width="1.6" stroke-dasharray="3 4"/></svg>
<div style="top:722.57px;font-size:31.8px;line-height:31.8px;color:#111;white-space:nowrap;left:159px;transform:scaleX(0.8254716981132075);transform-origin:0 0;">21 BETONVLOER</div>
<div style="left:128px;top:780px;width:27px;height:2px;background-image:linear-gradient(90deg,#7a7a7a 50%, transparent 50%);background-size:5px 2px;"></div>
<svg style="position:absolute;left:156px;top:761px;" width="44" height="36" viewBox="0 0 44 36"><path d="M10 15 H38 L42 19 V35 H10 Z" fill="#5a5a5a" opacity="0.9"/><path d="M2 6 Q2 2 6 2 H15 Q17 2 19 5 L20 7 H31 L35 11 V30 H2 Z" fill="#fcf48a" stroke="#d8a030" stroke-width="2"/><path d="M2 7 V30 H8 V12 H33" fill="#eab040" stroke="#d8a030" stroke-width="1.5"/><path d="M7 12 H35 L39 16 V32 H7 Z" fill="url(#fg)" stroke="#cf9628" stroke-width="2"/><path d="M7 31 H39" stroke="#a06a10" stroke-width="2.5"/><path d="M10 22 H36" stroke="#ffc8a0" stroke-width="1.6" stroke-dasharray="3 4"/></svg>
<div style="top:762.57px;font-size:31.8px;line-height:31.8px;color:#111;white-space:nowrap;left:206px;transform:scaleX(0.8254716981132075);transform-origin:0 0;">22.51 Metselwerk</div>
<div style="left:128px;top:820px;width:27px;height:2px;background-image:linear-gradient(90deg,#7a7a7a 50%, transparent 50%);background-size:5px 2px;"></div>
<svg style="position:absolute;left:156px;top:801px;" width="44" height="36" viewBox="0 0 44 36"><path d="M10 15 H38 L42 19 V35 H10 Z" fill="#5a5a5a" opacity="0.9"/><path d="M2 6 Q2 2 6 2 H15 Q17 2 19 5 L20 7 H31 L35 11 V30 H2 Z" fill="#fcf48a" stroke="#d8a030" stroke-width="2"/><path d="M2 7 V30 H8 V12 H33" fill="#eab040" stroke="#d8a030" stroke-width="1.5"/><path d="M7 12 H35 L39 16 V32 H7 Z" fill="url(#fg)" stroke="#cf9628" stroke-width="2"/><path d="M7 31 H39" stroke="#a06a10" stroke-width="2.5"/><path d="M10 22 H36" stroke="#ffc8a0" stroke-width="1.6" stroke-dasharray="3 4"/></svg>
<div style="top:802.57px;font-size:31.8px;line-height:31.8px;color:#111;white-space:nowrap;left:206px;transform:scaleX(0.8254716981132075);transform-origin:0 0;">21.50 Betonwerk</div>
<div style="left:81px;top:860px;width:26px;height:2px;background-image:linear-gradient(90deg,#7a7a7a 50%, transparent 50%);background-size:5px 2px;"></div>
<svg style="position:absolute;left:70px;top:850px;" width="22" height="22" viewBox="0 0 22 22"><rect x="1" y="1" width="20" height="19" rx="2" fill="#eaeaea" stroke="#9a9a9a" stroke-width="2"/><path d="M5 10.5 H17" stroke="#3a4ea0" stroke-width="2.2"/><path d="M11 5 V16" stroke="#3a4ea0" stroke-width="2.2"/></svg>
<svg style="position:absolute;left:108px;top:841px;" width="44" height="36" viewBox="0 0 44 36"><path d="M10 15 H38 L42 19 V35 H10 Z" fill="#5a5a5a" opacity="0.9"/><path d="M2 6 Q2 2 6 2 H15 Q17 2 19 5 L20 7 H31 L35 11 V30 H2 Z" fill="#fcf48a" stroke="#d8a030" stroke-width="2"/><path d="M2 7 V30 H8 V12 H33" fill="#eab040" stroke="#d8a030" stroke-width="1.5"/><path d="M7 12 H35 L39 16 V32 H7 Z" fill="url(#fg)" stroke="#cf9628" stroke-width="2"/><path d="M7 31 H39" stroke="#a06a10" stroke-width="2.5"/><path d="M10 22 H36" stroke="#ffc8a0" stroke-width="1.6" stroke-dasharray="3 4"/></svg>
<div style="top:842.57px;font-size:31.8px;line-height:31.8px;color:#111;white-space:nowrap;left:159px;transform:scaleX(0.8254716981132075);transform-origin:0 0;">24 KAPCONSTRUCTIE</div>
<div style="left:81px;top:900px;width:26px;height:2px;background-image:linear-gradient(90deg,#7a7a7a 50%, transparent 50%);background-size:5px 2px;"></div>
<svg style="position:absolute;left:70px;top:890px;" width="22" height="22" viewBox="0 0 22 22"><rect x="1" y="1" width="20" height="19" rx="2" fill="#eaeaea" stroke="#9a9a9a" stroke-width="2"/><path d="M5 10.5 H17" stroke="#3a4ea0" stroke-width="2.2"/><path d="M11 5 V16" stroke="#3a4ea0" stroke-width="2.2"/></svg>
<svg style="position:absolute;left:108px;top:881px;" width="44" height="36" viewBox="0 0 44 36"><path d="M10 15 H38 L42 19 V35 H10 Z" fill="#5a5a5a" opacity="0.9"/><path d="M2 6 Q2 2 6 2 H15 Q17 2 19 5 L20 7 H31 L35 11 V30 H2 Z" fill="#fcf48a" stroke="#d8a030" stroke-width="2"/><path d="M2 7 V30 H8 V12 H33" fill="#eab040" stroke="#d8a030" stroke-width="1.5"/><path d="M7 12 H35 L39 16 V32 H7 Z" fill="url(#fg)" stroke="#cf9628" stroke-width="2"/><path d="M7 31 H39" stroke="#a06a10" stroke-width="2.5"/><path d="M10 22 H36" stroke="#ffc8a0" stroke-width="1.6" stroke-dasharray="3 4"/></svg>
<div style="top:882.57px;font-size:31.8px;line-height:31.8px;color:#111;white-space:nowrap;left:159px;transform:scaleX(0.8254716981132075);transform-origin:0 0;">30 BUITENKOZIJNEN</div>
<div style="left:81px;top:940px;width:26px;height:2px;background-image:linear-gradient(90deg,#7a7a7a 50%, transparent 50%);background-size:5px 2px;"></div>
<svg style="position:absolute;left:108px;top:921px;" width="44" height="36" viewBox="0 0 44 36"><path d="M10 15 H38 L42 19 V35 H10 Z" fill="#5a5a5a" opacity="0.9"/><path d="M2 6 Q2 2 6 2 H15 Q17 2 19 5 L20 7 H31 L35 11 V30 H2 Z" fill="#fcf48a" stroke="#d8a030" stroke-width="2"/><path d="M2 7 V30 H8 V12 H33" fill="#eab040" stroke="#d8a030" stroke-width="1.5"/><path d="M7 12 H35 L39 16 V32 H7 Z" fill="url(#fg)" stroke="#cf9628" stroke-width="2"/><path d="M7 31 H39" stroke="#a06a10" stroke-width="2.5"/><path d="M10 22 H36" stroke="#ffc8a0" stroke-width="1.6" stroke-dasharray="3 4"/></svg>
<div style="top:922.57px;font-size:31.8px;line-height:31.8px;color:#111;white-space:nowrap;left:159px;transform:scaleX(0.8254716981132075);transform-origin:0 0;">70 ELEKTRISCHE INSTALLATIE</div>
<div style="left:33px;top:980px;width:25px;height:2px;background-image:linear-gradient(90deg,#7a7a7a 50%, transparent 50%);background-size:5px 2px;"></div>
<svg style="position:absolute;left:59px;top:961px;" width="44" height="36" viewBox="0 0 44 36"><path d="M10 15 H38 L42 19 V35 H10 Z" fill="#5a5a5a" opacity="0.9"/><path d="M2 6 Q2 2 6 2 H15 Q17 2 19 5 L20 7 H31 L35 11 V30 H2 Z" fill="#fcf48a" stroke="#d8a030" stroke-width="2"/><path d="M2 7 V30 H8 V12 H33" fill="#eab040" stroke="#d8a030" stroke-width="1.5"/><path d="M7 12 H35 L39 16 V32 H7 Z" fill="url(#fg)" stroke="#cf9628" stroke-width="2"/><path d="M7 31 H39" stroke="#a06a10" stroke-width="2.5"/><path d="M10 22 H36" stroke="#ffc8a0" stroke-width="1.6" stroke-dasharray="3 4"/></svg>
<div style="top:962.57px;font-size:31.8px;line-height:31.8px;color:#111;white-space:nowrap;left:112px;transform:scaleX(0.8254716981132075);transform-origin:0 0;">Documenten</div>
<div style="left:33px;top:1020px;width:25px;height:2px;background-image:linear-gradient(90deg,#7a7a7a 50%, transparent 50%);background-size:5px 2px;"></div>
<svg style="position:absolute;left:22px;top:1010px;" width="22" height="22" viewBox="0 0 22 22"><rect x="1" y="1" width="20" height="19" rx="2" fill="#eaeaea" stroke="#9a9a9a" stroke-width="2"/><path d="M5 10.5 H17" stroke="#3a4ea0" stroke-width="2.2"/><path d="M11 5 V16" stroke="#3a4ea0" stroke-width="2.2"/></svg>
<svg style="position:absolute;left:59px;top:1001px;" width="44" height="36" viewBox="0 0 44 36"><path d="M10 15 H38 L42 19 V35 H10 Z" fill="#5a5a5a" opacity="0.9"/><path d="M2 6 Q2 2 6 2 H15 Q17 2 19 5 L20 7 H31 L35 11 V30 H2 Z" fill="#fcf48a" stroke="#d8a030" stroke-width="2"/><path d="M2 7 V30 H8 V12 H33" fill="#eab040" stroke="#d8a030" stroke-width="1.5"/><path d="M7 12 H35 L39 16 V32 H7 Z" fill="url(#fg)" stroke="#cf9628" stroke-width="2"/><path d="M7 31 H39" stroke="#a06a10" stroke-width="2.5"/><path d="M10 22 H36" stroke="#ffc8a0" stroke-width="1.6" stroke-dasharray="3 4"/></svg>
<div style="top:1002.57px;font-size:31.8px;line-height:31.8px;color:#111;white-space:nowrap;left:112px;transform:scaleX(0.8254716981132075);transform-origin:0 0;">Uittrekstaten</div>
<div style="left:645px;top:397px;width:3133px;height:1807px;background:#ffffff;"></div>
<div style="left:645px;top:396px;width:3181px;height:3px;background:#7b7b7b;"></div>
<div style="left:645px;top:396px;width:3px;height:1808px;background:#7b7b7b;"></div>
<div style="left:648px;top:399px;width:2602px;height:94px;background:#e4e4e4;"></div>
<div style="left:2250px;top:399px;width:200px;height:94px;background:#d3d3d3;"></div>
<div style="left:2250px;top:489px;width:200px;height:4px;background:#1e7a46;"></div>
<div style="left:712px;top:399px;width:2px;height:94px;background:linear-gradient(#d8d8d8,#a0a0a0 35%,#a0a0a0);"></div>
<div style="left:912px;top:399px;width:2px;height:94px;background:linear-gradient(#d8d8d8,#a0a0a0 35%,#a0a0a0);"></div>
<div style="left:1107px;top:399px;width:2px;height:94px;background:linear-gradient(#d8d8d8,#a0a0a0 35%,#a0a0a0);"></div>
<div style="left:1144px;top:399px;width:2px;height:94px;background:linear-gradient(#d8d8d8,#a0a0a0 35%,#a0a0a0);"></div>
<div style="left:1825px;top:399px;width:2px;height:94px;background:linear-gradient(#d8d8d8,#a0a0a0 35%,#a0a0a0);"></div>
<div style="left:2101px;top:399px;width:2px;height:94px;background:linear-gradient(#d8d8d8,#a0a0a0 35%,#a0a0a0);"></div>
<div style="left:2163px;top:399px;width:2px;height:94px;background:linear-gradient(#d8d8d8,#a0a0a0 35%,#a0a0a0);"></div>
<div style="left:2250px;top:399px;width:2px;height:94px;background:linear-gradient(#d8d8d8,#a0a0a0 35%,#a0a0a0);"></div>
<div style="left:2450px;top:399px;width:2px;height:94px;background:linear-gradient(#d8d8d8,#a0a0a0 35%,#a0a0a0);"></div>
<div style="left:2650px;top:399px;width:2px;height:94px;background:linear-gradient(#d8d8d8,#a0a0a0 35%,#a0a0a0);"></div>
<div style="left:2850px;top:399px;width:2px;height:94px;background:linear-gradient(#d8d8d8,#a0a0a0 35%,#a0a0a0);"></div>
<div style="left:3050px;top:399px;width:2px;height:94px;background:linear-gradient(#d8d8d8,#a0a0a0 35%,#a0a0a0);"></div>
<div style="left:648px;top:492px;width:2602px;height:2px;background:#a0a0a0;"></div>
<svg style="position:absolute;left:672px;top:455px;" width="30" height="30" viewBox="0 0 30 30"><path d="M28 2 V28 H2 Z" fill="#b3b3b3"/></svg>
<div style="top:430.60px;font-size:30.0px;line-height:30.0px;color:#1a1a1a;white-space:nowrap;left:-2100px;width:3000px;text-align:right;transform:scaleX(0.8617439543275704);transform-origin:100% 0;">Milieukaart</div>
<div style="top:430.60px;font-size:30.0px;line-height:30.0px;color:#1a1a1a;white-space:nowrap;left:921px;transform:scaleX(0.8574883173752492);transform-origin:0 0;">Code</div>
<div style="top:430.60px;font-size:30.0px;line-height:30.0px;color:#1a1a1a;white-space:nowrap;left:1117px;transform:scaleX(0.8506666666666667);transform-origin:0 0;">S</div>
<div style="top:430.60px;font-size:30.0px;line-height:30.0px;color:#1a1a1a;white-space:nowrap;left:1154px;transform:scaleX(0.8565518919576591);transform-origin:0 0;">Omschrijving</div>
<div style="top:430.60px;font-size:30.0px;line-height:30.0px;color:#1a1a1a;white-space:nowrap;left:-912px;width:3000px;text-align:right;transform:scaleX(0.8506666666666667);transform-origin:100% 0;">Hoeveelheid</div>
<div style="top:430.60px;font-size:30.0px;line-height:30.0px;color:#2f8f6f;white-space:nowrap;left:2261px;transform:scaleX(0.8726867956031724);transform-origin:0 0;">Levensfases</div>
<div style="top:430.60px;font-size:30.0px;line-height:30.0px;color:#1a1a1a;white-space:nowrap;left:-362px;width:3000px;text-align:right;transform:scaleX(0.8429904884937371);transform-origin:100% 0;">CO2</div>
<div style="top:416.60px;font-size:30.0px;line-height:30.0px;color:#1a1a1a;white-space:nowrap;left:-163px;width:3000px;text-align:right;transform:scaleX(0.8783478382354151);transform-origin:100% 0;">Doorgerekend</div>
<div style="top:448.60px;font-size:30.0px;line-height:30.0px;color:#1a1a1a;white-space:nowrap;left:-162px;width:3000px;text-align:right;transform:scaleX(0.8534717341550881);transform-origin:100% 0;">e CO2</div>
<div style="top:430.60px;font-size:30.0px;line-height:30.0px;color:#1a1a1a;white-space:nowrap;left:37px;width:3000px;text-align:right;transform:scaleX(0.8361969210938759);transform-origin:100% 0;">MKI</div>
<div style="top:416.60px;font-size:30.0px;line-height:30.0px;color:#1a1a1a;white-space:nowrap;left:238px;width:3000px;text-align:right;transform:scaleX(0.8783478382354151);transform-origin:100% 0;">Doorgerekend</div>
<div style="top:448.60px;font-size:30.0px;line-height:30.0px;color:#1a1a1a;white-space:nowrap;left:238px;width:3000px;text-align:right;transform:scaleX(0.899736779133764);transform-origin:100% 0;">e MKI</div>
<div style="left:648px;top:494px;width:63px;height:43px;background:#e4e4e4;"></div>
<div style="left:648px;top:537px;width:63px;height:2px;background:linear-gradient(90deg,#e4e4e4,#a0a0a0 60%,#b8b8b8);"></div>
<div style="top:501.25px;font-size:31.0px;line-height:31.0px;color:#111;white-space:nowrap;left:-820px;width:3000px;text-align:center;transform:scaleX(0.832258064516129);transform-origin:50% 0;">7</div>
<div style="left:713px;top:494px;width:2537px;height:43px;background:#20b2aa;"></div>
<div style="left:713px;top:537px;width:2537px;height:2px;background:#d4d4d4;"></div>
<div style="top:499.64px;font-size:27px;line-height:27px;color:#000;white-space:nowrap;font-weight:700;letter-spacing:-0.8px;left:922px;">05</div>
<div style="top:499.64px;font-size:27px;line-height:27px;color:#000;white-space:nowrap;font-weight:700;letter-spacing:-0.8px;left:1117px;">1</div>
<div style="top:499.64px;font-size:27px;line-height:27px;color:#000;white-space:nowrap;font-weight:700;letter-spacing:-0.8px;left:1155px;">PEIL EN UITZETTEN</div>
<div style="left:648px;top:539px;width:63px;height:43px;background:#e4e4e4;"></div>
<div style="left:648px;top:582px;width:63px;height:2px;background:linear-gradient(90deg,#e4e4e4,#a0a0a0 60%,#b8b8b8);"></div>
<div style="top:546.25px;font-size:31.0px;line-height:31.0px;color:#111;white-space:nowrap;left:-820px;width:3000px;text-align:center;transform:scaleX(0.832258064516129);transform-origin:50% 0;">8</div>
<div style="left:713px;top:582px;width:2537px;height:2px;background:#d4d4d4;"></div>
<div style="top:544.64px;font-size:27px;line-height:27px;color:#000;white-space:nowrap;letter-spacing:0.2px;left:1167px;">Uitzetten t.b.v. grondwerk</div>
<div style="top:544.64px;font-size:27px;line-height:27px;color:#000;white-space:nowrap;letter-spacing:0.2px;left:-912px;width:3000px;text-align:right;">1,000</div>
<div style="top:544.64px;font-size:27px;line-height:27px;color:#000;white-space:nowrap;letter-spacing:0.2px;left:2171px;">post</div>
<div style="left:648px;top:584px;width:63px;height:43px;background:#e4e4e4;"></div>
<div style="left:648px;top:627px;width:63px;height:2px;background:linear-gradient(90deg,#e4e4e4,#a0a0a0 60%,#b8b8b8);"></div>
<div style="top:591.25px;font-size:31.0px;line-height:31.0px;color:#111;white-space:nowrap;left:-820px;width:3000px;text-align:center;transform:scaleX(0.832258064516129);transform-origin:50% 0;">9</div>
<div style="left:713px;top:627px;width:2537px;height:2px;background:#d4d4d4;"></div>
<div style="top:589.64px;font-size:27px;line-height:27px;color:#000;white-space:nowrap;letter-spacing:0.2px;left:1167px;">Uitzetten bouwraam</div>
<div style="top:589.64px;font-size:27px;line-height:27px;color:#000;white-space:nowrap;letter-spacing:0.2px;left:-912px;width:3000px;text-align:right;">1,000</div>
<div style="top:589.64px;font-size:27px;line-height:27px;color:#000;white-space:nowrap;letter-spacing:0.2px;left:2171px;">post</div>
<div style="left:648px;top:629px;width:63px;height:43px;background:#e4e4e4;"></div>
<div style="left:648px;top:672px;width:63px;height:2px;background:linear-gradient(90deg,#e4e4e4,#a0a0a0 60%,#b8b8b8);"></div>
<div style="top:636.25px;font-size:31.0px;line-height:31.0px;color:#111;white-space:nowrap;left:-820px;width:3000px;text-align:center;transform:scaleX(0.832258064516129);transform-origin:50% 0;">10</div>
<div style="left:713px;top:672px;width:2537px;height:2px;background:#d4d4d4;"></div>
<div style="top:634.64px;font-size:27px;line-height:27px;color:#000;white-space:nowrap;letter-spacing:0.2px;left:1167px;">Herstel na heiwerken en onderhoud</div>
<div style="top:634.64px;font-size:27px;line-height:27px;color:#000;white-space:nowrap;letter-spacing:0.2px;left:-912px;width:3000px;text-align:right;">1,000</div>
<div style="top:634.64px;font-size:27px;line-height:27px;color:#000;white-space:nowrap;letter-spacing:0.2px;left:2171px;">post</div>
<div style="left:648px;top:674px;width:63px;height:43px;background:#e4e4e4;"></div>
<div style="left:648px;top:717px;width:63px;height:2px;background:linear-gradient(90deg,#e4e4e4,#a0a0a0 60%,#b8b8b8);"></div>
<div style="top:681.25px;font-size:31.0px;line-height:31.0px;color:#111;white-space:nowrap;left:-820px;width:3000px;text-align:center;transform:scaleX(0.832258064516129);transform-origin:50% 0;">11</div>
<div style="left:713px;top:674px;width:2537px;height:43px;background:#20b2aa;"></div>
<div style="left:713px;top:717px;width:2537px;height:2px;background:#d4d4d4;"></div>
<div style="top:679.64px;font-size:27px;line-height:27px;color:#000;white-space:nowrap;font-weight:700;letter-spacing:-0.8px;left:922px;">12</div>
<div style="top:679.64px;font-size:27px;line-height:27px;color:#000;white-space:nowrap;font-weight:700;letter-spacing:-0.8px;left:1117px;">1</div>
<div style="top:679.64px;font-size:27px;line-height:27px;color:#000;white-space:nowrap;font-weight:700;letter-spacing:-0.8px;left:1155px;">GRONDWERKEN</div>
<div style="left:648px;top:719px;width:63px;height:43px;background:#e4e4e4;"></div>
<div style="left:648px;top:762px;width:63px;height:2px;background:linear-gradient(90deg,#e4e4e4,#a0a0a0 60%,#b8b8b8);"></div>
<div style="top:726.25px;font-size:31.0px;line-height:31.0px;color:#111;white-space:nowrap;left:-820px;width:3000px;text-align:center;transform:scaleX(0.832258064516129);transform-origin:50% 0;">12</div>
<div style="left:713px;top:719px;width:2537px;height:43px;background:#a9a9a9;"></div>
<div style="left:713px;top:762px;width:2537px;height:2px;background:#d4d4d4;"></div>
<div style="top:724.64px;font-size:27px;line-height:27px;color:#000;white-space:nowrap;font-weight:700;letter-spacing:-0.8px;left:922px;">12.40</div>
<div style="top:724.64px;font-size:27px;line-height:27px;color:#000;white-space:nowrap;font-weight:700;letter-spacing:-0.8px;left:1117px;">2</div>
<div style="top:724.64px;font-size:27px;line-height:27px;color:#000;white-space:nowrap;font-weight:700;letter-spacing:-0.8px;left:1167px;">Ontgravingen</div>
<div style="left:648px;top:764px;width:63px;height:43px;background:#e4e4e4;"></div>
<div style="left:648px;top:807px;width:63px;height:2px;background:linear-gradient(90deg,#e4e4e4,#a0a0a0 60%,#b8b8b8);"></div>
<div style="top:771.25px;font-size:31.0px;line-height:31.0px;color:#111;white-space:nowrap;left:-820px;width:3000px;text-align:center;transform:scaleX(0.832258064516129);transform-origin:50% 0;">13</div>
<div style="left:713px;top:807px;width:2537px;height:2px;background:#d4d4d4;"></div>
<div style="top:769.64px;font-size:27px;line-height:27px;color:#000;white-space:nowrap;letter-spacing:0.2px;left:1180px;">Ontgraven bouwput ca. 40cm</div>
<div style="top:769.64px;font-size:27px;line-height:27px;color:#000;white-space:nowrap;letter-spacing:0.2px;left:-912px;width:3000px;text-align:right;">120,000</div>
<div style="top:769.64px;font-size:27px;line-height:27px;color:#000;white-space:nowrap;letter-spacing:0.2px;left:2171px;">m3</div>
<div style="left:648px;top:809px;width:63px;height:43px;background:#e4e4e4;"></div>
<div style="left:648px;top:852px;width:63px;height:2px;background:linear-gradient(90deg,#e4e4e4,#a0a0a0 60%,#b8b8b8);"></div>
<div style="top:816.25px;font-size:31.0px;line-height:31.0px;color:#111;white-space:nowrap;left:-820px;width:3000px;text-align:center;transform:scaleX(0.832258064516129);transform-origin:50% 0;">14</div>
<div style="left:713px;top:852px;width:2537px;height:2px;background:#d4d4d4;"></div>
<div style="top:814.64px;font-size:27px;line-height:27px;color:#000;white-space:nowrap;letter-spacing:0.2px;left:1180px;">Ontgraven bouwput</div>
<div style="top:814.64px;font-size:27px;line-height:27px;color:#000;white-space:nowrap;letter-spacing:0.2px;left:-912px;width:3000px;text-align:right;">80,000</div>
<div style="top:814.64px;font-size:27px;line-height:27px;color:#000;white-space:nowrap;letter-spacing:0.2px;left:2171px;">m3</div>
<div style="left:648px;top:854px;width:63px;height:43px;background:#e4e4e4;"></div>
<div style="left:648px;top:897px;width:63px;height:2px;background:linear-gradient(90deg,#e4e4e4,#a0a0a0 60%,#b8b8b8);"></div>
<div style="top:861.25px;font-size:31.0px;line-height:31.0px;color:#111;white-space:nowrap;left:-820px;width:3000px;text-align:center;transform:scaleX(0.832258064516129);transform-origin:50% 0;">15</div>
<div style="left:713px;top:854px;width:2537px;height:43px;background:#a9a9a9;"></div>
<div style="left:713px;top:897px;width:2537px;height:2px;background:#d4d4d4;"></div>
<div style="top:859.64px;font-size:27px;line-height:27px;color:#000;white-space:nowrap;font-weight:700;letter-spacing:-0.8px;left:922px;">12.50</div>
<div style="top:859.64px;font-size:27px;line-height:27px;color:#000;white-space:nowrap;font-weight:700;letter-spacing:-0.8px;left:1117px;">2</div>
<div style="top:859.64px;font-size:27px;line-height:27px;color:#000;white-space:nowrap;font-weight:700;letter-spacing:-0.8px;left:1167px;">Aanvullingen</div>
<div style="left:648px;top:899px;width:63px;height:43px;background:#e4e4e4;"></div>
<div style="left:648px;top:942px;width:63px;height:2px;background:linear-gradient(90deg,#e4e4e4,#a0a0a0 60%,#b8b8b8);"></div>
<div style="top:906.25px;font-size:31.0px;line-height:31.0px;color:#111;white-space:nowrap;left:-820px;width:3000px;text-align:center;transform:scaleX(0.832258064516129);transform-origin:50% 0;">16</div>
<div style="left:713px;top:942px;width:2537px;height:2px;background:#d4d4d4;"></div>
<div style="top:904.64px;font-size:27px;line-height:27px;color:#000;white-space:nowrap;letter-spacing:0.2px;left:1180px;">Aanvullen fundering / vloer</div>
<div style="top:904.64px;font-size:27px;line-height:27px;color:#000;white-space:nowrap;letter-spacing:0.2px;left:-912px;width:3000px;text-align:right;">60,000</div>
<div style="top:904.64px;font-size:27px;line-height:27px;color:#000;white-space:nowrap;letter-spacing:0.2px;left:2171px;">m3</div>
<div style="left:648px;top:944px;width:63px;height:43px;background:#e4e4e4;"></div>
<div style="left:648px;top:987px;width:63px;height:2px;background:linear-gradient(90deg,#e4e4e4,#a0a0a0 60%,#b8b8b8);"></div>
<div style="top:951.25px;font-size:31.0px;line-height:31.0px;color:#111;white-space:nowrap;left:-820px;width:3000px;text-align:center;transform:scaleX(0.832258064516129);transform-origin:50% 0;">17</div>
<div style="left:713px;top:987px;width:2537px;height:2px;background:#d4d4d4;"></div>
<div style="top:949.64px;font-size:27px;line-height:27px;color:#000;white-space:nowrap;letter-spacing:0.2px;left:1180px;">Aanvullen c.q. spreiden grond tuinen</div>
<div style="top:949.64px;font-size:27px;line-height:27px;color:#000;white-space:nowrap;letter-spacing:0.2px;left:-912px;width:3000px;text-align:right;">40,000</div>
<div style="top:949.64px;font-size:27px;line-height:27px;color:#000;white-space:nowrap;letter-spacing:0.2px;left:2171px;">m3</div>
<div style="left:648px;top:989px;width:63px;height:43px;background:#e4e4e4;"></div>
<div style="left:648px;top:1032px;width:63px;height:2px;background:linear-gradient(90deg,#e4e4e4,#a0a0a0 60%,#b8b8b8);"></div>
<div style="top:996.25px;font-size:31.0px;line-height:31.0px;color:#111;white-space:nowrap;left:-820px;width:3000px;text-align:center;transform:scaleX(0.832258064516129);transform-origin:50% 0;">18</div>
<div style="left:713px;top:1032px;width:2537px;height:2px;background:#d4d4d4;"></div>
<div style="top:994.64px;font-size:27px;line-height:27px;color:#000;white-space:nowrap;letter-spacing:0.2px;left:1180px;">Zand aanvullen onder bergingsvloer</div>
<div style="top:994.64px;font-size:27px;line-height:27px;color:#000;white-space:nowrap;letter-spacing:0.2px;left:-912px;width:3000px;text-align:right;">12,000</div>
<div style="top:994.64px;font-size:27px;line-height:27px;color:#000;white-space:nowrap;letter-spacing:0.2px;left:2171px;">m3</div>
<div style="left:648px;top:1034px;width:63px;height:43px;background:#e4e4e4;"></div>
<div style="left:648px;top:1077px;width:63px;height:2px;background:linear-gradient(90deg,#e4e4e4,#a0a0a0 60%,#b8b8b8);"></div>
<div style="top:1041.25px;font-size:31.0px;line-height:31.0px;color:#111;white-space:nowrap;left:-820px;width:3000px;text-align:center;transform:scaleX(0.832258064516129);transform-origin:50% 0;">19</div>
<div style="left:713px;top:1034px;width:2537px;height:43px;background:#20b2aa;"></div>
<div style="left:713px;top:1077px;width:2537px;height:2px;background:#d4d4d4;"></div>
<div style="top:1039.64px;font-size:27px;line-height:27px;color:#000;white-space:nowrap;font-weight:700;letter-spacing:-0.8px;left:922px;">20</div>
<div style="top:1039.64px;font-size:27px;line-height:27px;color:#000;white-space:nowrap;font-weight:700;letter-spacing:-0.8px;left:1117px;">1</div>
<div style="top:1039.64px;font-size:27px;line-height:27px;color:#000;white-space:nowrap;font-weight:700;letter-spacing:-0.8px;left:1155px;">HEIWERK</div>
<div style="top:1039.64px;font-size:27px;line-height:27px;color:#000;white-space:nowrap;font-weight:700;letter-spacing:-0.8px;left:-161px;width:3000px;text-align:right;">189,52</div>
<div style="top:1039.64px;font-size:27px;line-height:27px;color:#000;white-space:nowrap;font-weight:700;letter-spacing:-0.8px;left:239px;width:3000px;text-align:right;">24,91</div>
<div style="left:648px;top:1079px;width:63px;height:43px;background:#e4e4e4;"></div>
<div style="left:648px;top:1122px;width:63px;height:2px;background:linear-gradient(90deg,#e4e4e4,#a0a0a0 60%,#b8b8b8);"></div>
<div style="top:1086.25px;font-size:31.0px;line-height:31.0px;color:#111;white-space:nowrap;left:-820px;width:3000px;text-align:center;transform:scaleX(0.832258064516129);transform-origin:50% 0;">20</div>
<div style="left:713px;top:1122px;width:2537px;height:2px;background:#d4d4d4;"></div>
<div style="top:1084.64px;font-size:27px;line-height:27px;color:#000;white-space:nowrap;letter-spacing:0.2px;left:1167px;">Uitzetten palen</div>
<div style="top:1084.64px;font-size:27px;line-height:27px;color:#000;white-space:nowrap;letter-spacing:0.2px;left:-912px;width:3000px;text-align:right;">20,000</div>
<div style="top:1084.64px;font-size:27px;line-height:27px;color:#000;white-space:nowrap;letter-spacing:0.2px;left:2171px;">st</div>
<div style="top:1084.64px;font-size:27px;line-height:27px;color:#000;white-space:nowrap;letter-spacing:0.2px;left:-361px;width:3000px;text-align:right;">5,98</div>
<div style="top:1084.64px;font-size:27px;line-height:27px;color:#000;white-space:nowrap;letter-spacing:0.2px;left:-161px;width:3000px;text-align:right;">23,93</div>
<div style="top:1084.64px;font-size:27px;line-height:27px;color:#000;white-space:nowrap;letter-spacing:0.2px;left:39px;width:3000px;text-align:right;">1,21</div>
<div style="top:1084.64px;font-size:27px;line-height:27px;color:#000;white-space:nowrap;letter-spacing:0.2px;left:239px;width:3000px;text-align:right;">4,85</div>
<svg style="position:absolute;left:714px;top:1080px;" width="48" height="42" viewBox="0 0 48 42"><rect x="0" y="0" width="7" height="8" fill="#f07a62"/><rect x="0" y="8" width="7" height="7" fill="#86d5cf"/><rect x="0" y="15" width="7" height="7" fill="#e000e8"/><circle cx="25" cy="25" r="15" fill="#86d5cf" stroke="#888" stroke-width="1"/><path d="M25 10 A15 15 0 0 1 40 25 L30 20 Z" fill="#d9f3f3"/><path d="M12 18 L18 12 L21 22 L27 24 L24 34 L30 40 Q16 40 11 30 Z" fill="#3f5d5d"/></svg>
<div style="left:648px;top:1124px;width:63px;height:43px;background:#d6d6d6;"></div>
<div style="left:648px;top:1167px;width:63px;height:2px;background:linear-gradient(90deg,#e4e4e4,#a0a0a0 60%,#b8b8b8);"></div>
<div style="top:1131.25px;font-size:31.0px;line-height:31.0px;color:#2e8b57;white-space:nowrap;left:-820px;width:3000px;text-align:center;transform:scaleX(0.832258064516129);transform-origin:50% 0;">21</div>
<div style="left:713px;top:1167px;width:2537px;height:2px;background:#d4d4d4;"></div>
<div style="top:1129.64px;font-size:27px;line-height:27px;color:#000;white-space:nowrap;letter-spacing:0.2px;left:922px;">STELPOST</div>
<div style="top:1129.64px;font-size:27px;line-height:27px;color:#000;white-space:nowrap;letter-spacing:0.2px;left:1117px;">S</div>
<div style="top:1129.64px;font-size:27px;line-height:27px;color:#000;white-space:nowrap;letter-spacing:0.2px;left:1167px;">Lev.+heien prefab betonpalen</div>
<div style="top:1129.64px;font-size:27px;line-height:27px;color:#000;white-space:nowrap;letter-spacing:0.2px;left:-912px;width:3000px;text-align:right;">20,000</div>
<div style="top:1129.64px;font-size:27px;line-height:27px;color:#000;white-space:nowrap;letter-spacing:0.2px;left:2171px;">st</div>
<div style="top:1129.64px;font-size:27px;line-height:27px;color:#000;white-space:nowrap;letter-spacing:0.2px;left:-361px;width:3000px;text-align:right;">165,59</div>
<div style="top:1129.64px;font-size:27px;line-height:27px;color:#000;white-space:nowrap;letter-spacing:0.2px;left:-161px;width:3000px;text-align:right;">165,59</div>
<div style="top:1129.64px;font-size:27px;line-height:27px;color:#000;white-space:nowrap;letter-spacing:0.2px;left:39px;width:3000px;text-align:right;">20,06</div>
<div style="top:1129.64px;font-size:27px;line-height:27px;color:#000;white-space:nowrap;letter-spacing:0.2px;left:239px;width:3000px;text-align:right;">20,06</div>
<div style="left:2252px;top:1124px;width:197px;height:43px;overflow:hidden;">
<div style="top:5.64px;font-size:27px;line-height:27px;color:#000;white-space:nowrap;letter-spacing:0.2px;left:7px;">B4 B5 C1 C2 C3 C4 D</div>
</div>
<svg style="position:absolute;left:714px;top:1125px;" width="48" height="42" viewBox="0 0 48 42"><rect x="0" y="0" width="7" height="8" fill="#f07a62"/><rect x="0" y="8" width="7" height="7" fill="#86d5cf"/><rect x="0" y="15" width="7" height="7" fill="#e000e8"/><circle cx="25" cy="25" r="15" fill="#86d5cf" stroke="#888" stroke-width="1"/><path d="M25 10 A15 15 0 0 1 40 25 L30 20 Z" fill="#d9f3f3"/><path d="M12 18 L18 12 L21 22 L27 24 L24 34 L30 40 Q16 40 11 30 Z" fill="#3f5d5d"/><path d="M30 40 L38 26 L46 40 Z" fill="#e9b15a"/><rect x="37" y="30" width="2.5" height="6" fill="#222"/><rect x="37" y="37" width="2.5" height="2" fill="#222"/></svg>
<div style="left:648px;top:1169px;width:63px;height:43px;background:#e4e4e4;"></div>
<div style="left:648px;top:1212px;width:63px;height:2px;background:linear-gradient(90deg,#e4e4e4,#a0a0a0 60%,#b8b8b8);"></div>
<div style="top:1176.25px;font-size:31.0px;line-height:31.0px;color:#111;white-space:nowrap;left:-820px;width:3000px;text-align:center;transform:scaleX(0.832258064516129);transform-origin:50% 0;">22</div>
<div style="left:713px;top:1212px;width:2537px;height:2px;background:#d4d4d4;"></div>
<div style="top:1174.64px;font-size:27px;line-height:27px;color:#000;white-space:nowrap;letter-spacing:0.2px;left:1167px;">Koppen snellen</div>
<div style="top:1174.64px;font-size:27px;line-height:27px;color:#000;white-space:nowrap;letter-spacing:0.2px;left:-912px;width:3000px;text-align:right;">20,000</div>
<div style="top:1174.64px;font-size:27px;line-height:27px;color:#000;white-space:nowrap;letter-spacing:0.2px;left:2171px;">st</div>
<div style="left:648px;top:1214px;width:63px;height:43px;background:#e4e4e4;"></div>
<div style="left:648px;top:1257px;width:63px;height:2px;background:linear-gradient(90deg,#e4e4e4,#a0a0a0 60%,#b8b8b8);"></div>
<div style="top:1221.25px;font-size:31.0px;line-height:31.0px;color:#111;white-space:nowrap;left:-820px;width:3000px;text-align:center;transform:scaleX(0.832258064516129);transform-origin:50% 0;">23</div>
<div style="left:713px;top:1257px;width:2537px;height:2px;background:#d4d4d4;"></div>
<div style="top:1219.64px;font-size:27px;line-height:27px;color:#000;white-space:nowrap;letter-spacing:0.2px;left:1167px;">Opruimen afval</div>
<div style="top:1219.64px;font-size:27px;line-height:27px;color:#000;white-space:nowrap;letter-spacing:0.2px;left:-912px;width:3000px;text-align:right;">4,000</div>
<div style="top:1219.64px;font-size:27px;line-height:27px;color:#000;white-space:nowrap;letter-spacing:0.2px;left:2171px;">st</div>
<div style="left:648px;top:1259px;width:63px;height:43px;background:#e4e4e4;"></div>
<div style="left:648px;top:1302px;width:63px;height:2px;background:linear-gradient(90deg,#e4e4e4,#a0a0a0 60%,#b8b8b8);"></div>
<div style="top:1266.25px;font-size:31.0px;line-height:31.0px;color:#111;white-space:nowrap;left:-820px;width:3000px;text-align:center;transform:scaleX(0.832258064516129);transform-origin:50% 0;">24</div>
<div style="left:713px;top:1259px;width:2537px;height:43px;background:#20b2aa;"></div>
<div style="left:713px;top:1302px;width:2537px;height:2px;background:#d4d4d4;"></div>
<div style="top:1264.64px;font-size:27px;line-height:27px;color:#000;white-space:nowrap;font-weight:700;letter-spacing:-0.8px;left:922px;">21</div>
<div style="top:1264.64px;font-size:27px;line-height:27px;color:#000;white-space:nowrap;font-weight:700;letter-spacing:-0.8px;left:1117px;">1</div>
<div style="top:1264.64px;font-size:27px;line-height:27px;color:#000;white-space:nowrap;font-weight:700;letter-spacing:-0.8px;left:1155px;">FUNDERINGSBALKEN</div>
<div style="top:1264.64px;font-size:27px;line-height:27px;color:#000;white-space:nowrap;font-weight:700;letter-spacing:-0.8px;left:-912px;width:3000px;text-align:right;">1,750</div>
<div style="top:1264.64px;font-size:27px;line-height:27px;color:#000;white-space:nowrap;font-weight:700;letter-spacing:-0.8px;left:2171px;">M3</div>
<div style="left:648px;top:1304px;width:63px;height:43px;background:#e4e4e4;"></div>
<div style="left:648px;top:1347px;width:63px;height:2px;background:linear-gradient(90deg,#e4e4e4,#a0a0a0 60%,#b8b8b8);"></div>
<div style="top:1311.25px;font-size:31.0px;line-height:31.0px;color:#111;white-space:nowrap;left:-820px;width:3000px;text-align:center;transform:scaleX(0.832258064516129);transform-origin:50% 0;">25</div>
<div style="left:713px;top:1304px;width:2537px;height:43px;background:#a9a9a9;"></div>
<div style="left:713px;top:1347px;width:2537px;height:2px;background:#d4d4d4;"></div>
<div style="top:1309.64px;font-size:27px;line-height:27px;color:#000;white-space:nowrap;font-weight:700;letter-spacing:-0.8px;left:922px;">21.50</div>
<div style="top:1309.64px;font-size:27px;line-height:27px;color:#000;white-space:nowrap;font-weight:700;letter-spacing:-0.8px;left:1117px;">2</div>
<div style="top:1309.64px;font-size:27px;line-height:27px;color:#000;white-space:nowrap;font-weight:700;letter-spacing:-0.8px;left:1167px;">Funderingsbalken 27x40cm</div>
<div style="top:1309.64px;font-size:27px;line-height:27px;color:#000;white-space:nowrap;font-weight:700;letter-spacing:-0.8px;left:-912px;width:3000px;text-align:right;">16,000</div>
<svg style="position:absolute;left:2101px;top:1304px;" width="42" height="40" viewBox="0 0 42 40"><path fill-rule="evenodd" d="M1 1 H41 V4 L2 40 H1 Z M11 10 H19 L11 18 Z" fill="#fcc850"/><path d="M41 3.5 L2 39.5" stroke="#fff" stroke-width="1.8" stroke-dasharray="2.5 2"/><path d="M5 5 H33" stroke="#5a2a10" stroke-width="2.2" stroke-dasharray="2.2 3.2"/><path d="M4 9 V30" stroke="#5a2a10" stroke-width="2.2" stroke-dasharray="2.2 3.2"/></svg>
<div style="top:1309.64px;font-size:27px;line-height:27px;color:#000;white-space:nowrap;font-weight:700;letter-spacing:-0.8px;left:2171px;">m1</div>
<div style="left:648px;top:1349px;width:63px;height:43px;background:#e4e4e4;"></div>
<div style="left:648px;top:1392px;width:63px;height:2px;background:linear-gradient(90deg,#e4e4e4,#a0a0a0 60%,#b8b8b8);"></div>
<div style="top:1356.25px;font-size:31.0px;line-height:31.0px;color:#111;white-space:nowrap;left:-820px;width:3000px;text-align:center;transform:scaleX(0.832258064516129);transform-origin:50% 0;">26</div>
<div style="left:713px;top:1392px;width:2537px;height:2px;background:#d4d4d4;"></div>
<div style="top:1354.64px;font-size:27px;line-height:27px;color:#000;white-space:nowrap;letter-spacing:0.2px;left:1180px;">Werkvloer</div>
<div style="top:1354.64px;font-size:27px;line-height:27px;color:#000;white-space:nowrap;letter-spacing:0.2px;left:-912px;width:3000px;text-align:right;">0,250</div>
<svg style="position:absolute;left:2101px;top:1349px;" width="42" height="40" viewBox="0 0 42 40"><path fill-rule="evenodd" d="M1 1 H41 V4 L2 40 H1 Z M11 10 H19 L11 18 Z" fill="#fcc850"/><path d="M41 3.5 L2 39.5" stroke="#fff" stroke-width="1.8" stroke-dasharray="2.5 2"/><path d="M5 5 H33" stroke="#5a2a10" stroke-width="2.2" stroke-dasharray="2.2 3.2"/><path d="M4 9 V30" stroke="#5a2a10" stroke-width="2.2" stroke-dasharray="2.2 3.2"/></svg>
<div style="top:1354.64px;font-size:27px;line-height:27px;color:#000;white-space:nowrap;letter-spacing:0.2px;left:2171px;">m3</div>
<div style="left:648px;top:1394px;width:63px;height:43px;background:#e4e4e4;"></div>
<div style="left:648px;top:1437px;width:63px;height:2px;background:linear-gradient(90deg,#e4e4e4,#a0a0a0 60%,#b8b8b8);"></div>
<div style="top:1401.25px;font-size:31.0px;line-height:31.0px;color:#111;white-space:nowrap;left:-820px;width:3000px;text-align:center;transform:scaleX(0.832258064516129);transform-origin:50% 0;">27</div>
<div style="left:713px;top:1437px;width:2537px;height:2px;background:#d4d4d4;"></div>
<div style="top:1399.64px;font-size:27px;line-height:27px;color:#000;white-space:nowrap;letter-spacing:0.2px;left:1180px;">Bekisting</div>
<div style="top:1399.64px;font-size:27px;line-height:27px;color:#000;white-space:nowrap;letter-spacing:0.2px;left:-912px;width:3000px;text-align:right;">12,800</div>
<svg style="position:absolute;left:2101px;top:1394px;" width="42" height="40" viewBox="0 0 42 40"><path fill-rule="evenodd" d="M1 1 H41 V4 L2 40 H1 Z M11 10 H19 L11 18 Z" fill="#fcc850"/><path d="M41 3.5 L2 39.5" stroke="#fff" stroke-width="1.8" stroke-dasharray="2.5 2"/><path d="M5 5 H33" stroke="#5a2a10" stroke-width="2.2" stroke-dasharray="2.2 3.2"/><path d="M4 9 V30" stroke="#5a2a10" stroke-width="2.2" stroke-dasharray="2.2 3.2"/></svg>
<div style="top:1399.64px;font-size:27px;line-height:27px;color:#000;white-space:nowrap;letter-spacing:0.2px;left:2171px;">m2</div>
<div style="left:648px;top:1439px;width:63px;height:43px;background:#e4e4e4;"></div>
<div style="left:648px;top:1482px;width:63px;height:2px;background:linear-gradient(90deg,#e4e4e4,#a0a0a0 60%,#b8b8b8);"></div>
<div style="top:1446.25px;font-size:31.0px;line-height:31.0px;color:#111;white-space:nowrap;left:-820px;width:3000px;text-align:center;transform:scaleX(0.832258064516129);transform-origin:50% 0;">28</div>
<div style="left:713px;top:1482px;width:2537px;height:2px;background:#d4d4d4;"></div>
<div style="top:1444.64px;font-size:27px;line-height:27px;color:#000;white-space:nowrap;letter-spacing:0.2px;left:1180px;">Afschrijving bekisting</div>
<div style="top:1444.64px;font-size:27px;line-height:27px;color:#000;white-space:nowrap;letter-spacing:0.2px;left:-912px;width:3000px;text-align:right;">12,800</div>
<svg style="position:absolute;left:2101px;top:1439px;" width="42" height="40" viewBox="0 0 42 40"><path fill-rule="evenodd" d="M1 1 H41 V4 L2 40 H1 Z M11 10 H19 L11 18 Z" fill="#fcc850"/><path d="M41 3.5 L2 39.5" stroke="#fff" stroke-width="1.8" stroke-dasharray="2.5 2"/><path d="M5 5 H33" stroke="#5a2a10" stroke-width="2.2" stroke-dasharray="2.2 3.2"/><path d="M4 9 V30" stroke="#5a2a10" stroke-width="2.2" stroke-dasharray="2.2 3.2"/></svg>
<div style="top:1444.64px;font-size:27px;line-height:27px;color:#000;white-space:nowrap;letter-spacing:0.2px;left:2171px;">m2</div>
<div style="left:648px;top:1484px;width:63px;height:43px;background:#e4e4e4;"></div>
<div style="left:648px;top:1527px;width:63px;height:2px;background:linear-gradient(90deg,#e4e4e4,#a0a0a0 60%,#b8b8b8);"></div>
<div style="top:1491.25px;font-size:31.0px;line-height:31.0px;color:#111;white-space:nowrap;left:-820px;width:3000px;text-align:center;transform:scaleX(0.832258064516129);transform-origin:50% 0;">29</div>
<div style="left:713px;top:1527px;width:2537px;height:2px;background:#d4d4d4;"></div>
<div style="top:1489.64px;font-size:27px;line-height:27px;color:#000;white-space:nowrap;letter-spacing:0.2px;left:1180px;">Bekistingsolie</div>
<div style="top:1489.64px;font-size:27px;line-height:27px;color:#000;white-space:nowrap;letter-spacing:0.2px;left:-912px;width:3000px;text-align:right;">1,500</div>
<svg style="position:absolute;left:2101px;top:1484px;" width="42" height="40" viewBox="0 0 42 40"><path fill-rule="evenodd" d="M1 1 H41 V4 L2 40 H1 Z M11 10 H19 L11 18 Z" fill="#fcc850"/><path d="M41 3.5 L2 39.5" stroke="#fff" stroke-width="1.8" stroke-dasharray="2.5 2"/><path d="M5 5 H33" stroke="#5a2a10" stroke-width="2.2" stroke-dasharray="2.2 3.2"/><path d="M4 9 V30" stroke="#5a2a10" stroke-width="2.2" stroke-dasharray="2.2 3.2"/></svg>
<div style="top:1489.64px;font-size:27px;line-height:27px;color:#000;white-space:nowrap;letter-spacing:0.2px;left:2171px;">ltr</div>
<div style="left:648px;top:1529px;width:63px;height:43px;background:#e4e4e4;"></div>
<div style="left:648px;top:1572px;width:63px;height:2px;background:linear-gradient(90deg,#e4e4e4,#a0a0a0 60%,#b8b8b8);"></div>
<div style="top:1536.25px;font-size:31.0px;line-height:31.0px;color:#111;white-space:nowrap;left:-820px;width:3000px;text-align:center;transform:scaleX(0.832258064516129);transform-origin:50% 0;">30</div>
<div style="left:713px;top:1572px;width:2537px;height:2px;background:#d4d4d4;"></div>
<div style="top:1534.64px;font-size:27px;line-height:27px;color:#000;white-space:nowrap;letter-spacing:0.2px;left:1180px;">Beton B25</div>
<div style="top:1534.64px;font-size:27px;line-height:27px;color:#000;white-space:nowrap;letter-spacing:0.2px;left:-912px;width:3000px;text-align:right;">1,750</div>
<svg style="position:absolute;left:2101px;top:1529px;" width="42" height="40" viewBox="0 0 42 40"><path fill-rule="evenodd" d="M1 1 H41 V4 L2 40 H1 Z M11 10 H19 L11 18 Z" fill="#fcc850"/><path d="M41 3.5 L2 39.5" stroke="#fff" stroke-width="1.8" stroke-dasharray="2.5 2"/><path d="M5 5 H33" stroke="#5a2a10" stroke-width="2.2" stroke-dasharray="2.2 3.2"/><path d="M4 9 V30" stroke="#5a2a10" stroke-width="2.2" stroke-dasharray="2.2 3.2"/></svg>
<div style="top:1534.64px;font-size:27px;line-height:27px;color:#000;white-space:nowrap;letter-spacing:0.2px;left:2171px;">m3</div>
<div style="left:648px;top:1574px;width:63px;height:43px;background:#e4e4e4;"></div>
<div style="left:648px;top:1617px;width:63px;height:2px;background:linear-gradient(90deg,#e4e4e4,#a0a0a0 60%,#b8b8b8);"></div>
<div style="top:1581.25px;font-size:31.0px;line-height:31.0px;color:#111;white-space:nowrap;left:-820px;width:3000px;text-align:center;transform:scaleX(0.832258064516129);transform-origin:50% 0;">31</div>
<div style="left:713px;top:1617px;width:2537px;height:2px;background:#d4d4d4;"></div>
<div style="top:1579.64px;font-size:27px;line-height:27px;color:#000;white-space:nowrap;letter-spacing:0.2px;left:1180px;">Wapening</div>
<div style="top:1579.64px;font-size:27px;line-height:27px;color:#000;white-space:nowrap;letter-spacing:0.2px;left:-912px;width:3000px;text-align:right;">90,000</div>
<svg style="position:absolute;left:2101px;top:1574px;" width="42" height="40" viewBox="0 0 42 40"><path fill-rule="evenodd" d="M1 1 H41 V4 L2 40 H1 Z M11 10 H19 L11 18 Z" fill="#fcc850"/><path d="M41 3.5 L2 39.5" stroke="#fff" stroke-width="1.8" stroke-dasharray="2.5 2"/><path d="M5 5 H33" stroke="#5a2a10" stroke-width="2.2" stroke-dasharray="2.2 3.2"/><path d="M4 9 V30" stroke="#5a2a10" stroke-width="2.2" stroke-dasharray="2.2 3.2"/></svg>
<div style="top:1579.64px;font-size:27px;line-height:27px;color:#000;white-space:nowrap;letter-spacing:0.2px;left:2171px;">kg</div>
<div style="left:648px;top:1619px;width:63px;height:43px;background:#e4e4e4;"></div>
<div style="left:648px;top:1662px;width:63px;height:2px;background:linear-gradient(90deg,#e4e4e4,#a0a0a0 60%,#b8b8b8);"></div>
<div style="top:1626.25px;font-size:31.0px;line-height:31.0px;color:#111;white-space:nowrap;left:-820px;width:3000px;text-align:center;transform:scaleX(0.832258064516129);transform-origin:50% 0;">32</div>
<div style="left:713px;top:1662px;width:2537px;height:2px;background:#d4d4d4;"></div>
<div style="top:1624.64px;font-size:27px;line-height:27px;color:#000;white-space:nowrap;letter-spacing:0.2px;left:1180px;">Betonblokjes</div>
<div style="top:1624.64px;font-size:27px;line-height:27px;color:#000;white-space:nowrap;letter-spacing:0.2px;left:-912px;width:3000px;text-align:right;">80,000</div>
<svg style="position:absolute;left:2101px;top:1619px;" width="42" height="40" viewBox="0 0 42 40"><path fill-rule="evenodd" d="M1 1 H41 V4 L2 40 H1 Z M11 10 H19 L11 18 Z" fill="#fcc850"/><path d="M41 3.5 L2 39.5" stroke="#fff" stroke-width="1.8" stroke-dasharray="2.5 2"/><path d="M5 5 H33" stroke="#5a2a10" stroke-width="2.2" stroke-dasharray="2.2 3.2"/><path d="M4 9 V30" stroke="#5a2a10" stroke-width="2.2" stroke-dasharray="2.2 3.2"/></svg>
<div style="top:1624.64px;font-size:27px;line-height:27px;color:#000;white-space:nowrap;letter-spacing:0.2px;left:2171px;">st</div>
<div style="left:648px;top:1664px;width:63px;height:43px;background:#e4e4e4;"></div>
<div style="left:648px;top:1707px;width:63px;height:2px;background:linear-gradient(90deg,#e4e4e4,#a0a0a0 60%,#b8b8b8);"></div>
<div style="top:1671.25px;font-size:31.0px;line-height:31.0px;color:#111;white-space:nowrap;left:-820px;width:3000px;text-align:center;transform:scaleX(0.832258064516129);transform-origin:50% 0;">33</div>
<div style="left:713px;top:1707px;width:2537px;height:2px;background:#d4d4d4;"></div>
<div style="top:1669.64px;font-size:27px;line-height:27px;color:#000;white-space:nowrap;letter-spacing:0.2px;left:1180px;">Binddraad</div>
<div style="top:1669.64px;font-size:27px;line-height:27px;color:#000;white-space:nowrap;letter-spacing:0.2px;left:-912px;width:3000px;text-align:right;">0,450</div>
<svg style="position:absolute;left:2101px;top:1664px;" width="42" height="40" viewBox="0 0 42 40"><path fill-rule="evenodd" d="M1 1 H41 V4 L2 40 H1 Z M11 10 H19 L11 18 Z" fill="#fcc850"/><path d="M41 3.5 L2 39.5" stroke="#fff" stroke-width="1.8" stroke-dasharray="2.5 2"/><path d="M5 5 H33" stroke="#5a2a10" stroke-width="2.2" stroke-dasharray="2.2 3.2"/><path d="M4 9 V30" stroke="#5a2a10" stroke-width="2.2" stroke-dasharray="2.2 3.2"/></svg>
<div style="top:1669.64px;font-size:27px;line-height:27px;color:#000;white-space:nowrap;letter-spacing:0.2px;left:2171px;">kg</div>
<div style="left:648px;top:1709px;width:63px;height:43px;background:#e4e4e4;"></div>
<div style="left:648px;top:1752px;width:63px;height:2px;background:linear-gradient(90deg,#e4e4e4,#a0a0a0 60%,#b8b8b8);"></div>
<div style="top:1716.25px;font-size:31.0px;line-height:31.0px;color:#111;white-space:nowrap;left:-820px;width:3000px;text-align:center;transform:scaleX(0.832258064516129);transform-origin:50% 0;">34</div>
<div style="left:713px;top:1752px;width:2537px;height:2px;background:#d4d4d4;"></div>
<div style="top:1714.64px;font-size:27px;line-height:27px;color:#000;white-space:nowrap;letter-spacing:0.2px;left:1180px;">Kraanuren</div>
<div style="top:1714.64px;font-size:27px;line-height:27px;color:#000;white-space:nowrap;letter-spacing:0.2px;left:-912px;width:3000px;text-align:right;">1,000</div>
<div style="top:1714.64px;font-size:27px;line-height:27px;color:#000;white-space:nowrap;letter-spacing:0.2px;left:2171px;">uur</div>
<div style="left:648px;top:1754px;width:63px;height:43px;background:#e4e4e4;"></div>
<div style="left:648px;top:1797px;width:63px;height:2px;background:linear-gradient(90deg,#e4e4e4,#a0a0a0 60%,#b8b8b8);"></div>
<div style="top:1761.25px;font-size:31.0px;line-height:31.0px;color:#111;white-space:nowrap;left:-820px;width:3000px;text-align:center;transform:scaleX(0.832258064516129);transform-origin:50% 0;">35</div>
<div style="left:713px;top:1754px;width:2537px;height:43px;background:#20b2aa;"></div>
<div style="left:713px;top:1797px;width:2537px;height:2px;background:#d4d4d4;"></div>
<div style="top:1759.64px;font-size:27px;line-height:27px;color:#000;white-space:nowrap;font-weight:700;letter-spacing:-0.8px;left:922px;">22</div>
<div style="top:1759.64px;font-size:27px;line-height:27px;color:#000;white-space:nowrap;font-weight:700;letter-spacing:-0.8px;left:1117px;">1</div>
<div style="top:1759.64px;font-size:27px;line-height:27px;color:#000;white-space:nowrap;font-weight:700;letter-spacing:-0.8px;left:1155px;">METSELWERKEN</div>
<div style="top:1759.64px;font-size:27px;line-height:27px;color:#000;white-space:nowrap;font-weight:700;letter-spacing:-0.8px;left:-912px;width:3000px;text-align:right;">2,000</div>
<div style="top:1759.64px;font-size:27px;line-height:27px;color:#000;white-space:nowrap;font-weight:700;letter-spacing:-0.8px;left:2171px;">brg</div>
<div style="left:648px;top:1799px;width:63px;height:43px;background:#e4e4e4;"></div>
<div style="left:648px;top:1842px;width:63px;height:2px;background:linear-gradient(90deg,#e4e4e4,#a0a0a0 60%,#b8b8b8);"></div>
<div style="top:1806.25px;font-size:31.0px;line-height:31.0px;color:#111;white-space:nowrap;left:-820px;width:3000px;text-align:center;transform:scaleX(0.832258064516129);transform-origin:50% 0;">36</div>
<div style="left:713px;top:1799px;width:2537px;height:43px;background:#a9a9a9;"></div>
<div style="left:713px;top:1842px;width:2537px;height:2px;background:#d4d4d4;"></div>
<div style="top:1804.64px;font-size:27px;line-height:27px;color:#000;white-space:nowrap;font-weight:700;letter-spacing:-0.8px;left:922px;">22.51</div>
<div style="top:1804.64px;font-size:27px;line-height:27px;color:#000;white-space:nowrap;font-weight:700;letter-spacing:-0.8px;left:1117px;">2</div>
<div style="top:1804.64px;font-size:27px;line-height:27px;color:#000;white-space:nowrap;font-weight:700;letter-spacing:-0.8px;left:1167px;">Gevelmetselwerk</div>
<div style="top:1804.64px;font-size:27px;line-height:27px;color:#000;white-space:nowrap;font-weight:700;letter-spacing:-0.8px;left:-912px;width:3000px;text-align:right;">36,000</div>
<svg style="position:absolute;left:2101px;top:1799px;" width="42" height="40" viewBox="0 0 42 40"><path fill-rule="evenodd" d="M1 1 H41 V4 L2 40 H1 Z M11 10 H19 L11 18 Z" fill="#fcc850"/><path d="M41 3.5 L2 39.5" stroke="#fff" stroke-width="1.8" stroke-dasharray="2.5 2"/><path d="M5 5 H33" stroke="#5a2a10" stroke-width="2.2" stroke-dasharray="2.2 3.2"/><path d="M4 9 V30" stroke="#5a2a10" stroke-width="2.2" stroke-dasharray="2.2 3.2"/></svg>
<div style="top:1804.64px;font-size:27px;line-height:27px;color:#000;white-space:nowrap;font-weight:700;letter-spacing:-0.8px;left:2171px;">m2</div>
<div style="left:648px;top:1844px;width:63px;height:43px;background:#e4e4e4;"></div>
<div style="left:648px;top:1887px;width:63px;height:2px;background:linear-gradient(90deg,#e4e4e4,#a0a0a0 60%,#b8b8b8);"></div>
<div style="top:1851.25px;font-size:31.0px;line-height:31.0px;color:#111;white-space:nowrap;left:-820px;width:3000px;text-align:center;transform:scaleX(0.832258064516129);transform-origin:50% 0;">37</div>
<div style="left:713px;top:1887px;width:2537px;height:2px;background:#d4d4d4;"></div>
<div style="top:1849.64px;font-size:27px;line-height:27px;color:#000;white-space:nowrap;letter-spacing:0.2px;left:1180px;">Gevelstenen</div>
<div style="top:1849.64px;font-size:27px;line-height:27px;color:#000;white-space:nowrap;letter-spacing:0.2px;left:-912px;width:3000px;text-align:right;">2,781</div>
<svg style="position:absolute;left:2101px;top:1844px;" width="42" height="40" viewBox="0 0 42 40"><path fill-rule="evenodd" d="M1 1 H41 V4 L2 40 H1 Z M11 10 H19 L11 18 Z" fill="#fcc850"/><path d="M41 3.5 L2 39.5" stroke="#fff" stroke-width="1.8" stroke-dasharray="2.5 2"/><path d="M5 5 H33" stroke="#5a2a10" stroke-width="2.2" stroke-dasharray="2.2 3.2"/><path d="M4 9 V30" stroke="#5a2a10" stroke-width="2.2" stroke-dasharray="2.2 3.2"/></svg>
<div style="top:1849.64px;font-size:27px;line-height:27px;color:#000;white-space:nowrap;letter-spacing:0.2px;left:2171px;">dzd</div>
<div style="left:648px;top:1889px;width:63px;height:43px;background:#e4e4e4;"></div>
<div style="left:648px;top:1932px;width:63px;height:2px;background:linear-gradient(90deg,#e4e4e4,#a0a0a0 60%,#b8b8b8);"></div>
<div style="top:1896.25px;font-size:31.0px;line-height:31.0px;color:#111;white-space:nowrap;left:-820px;width:3000px;text-align:center;transform:scaleX(0.832258064516129);transform-origin:50% 0;">38</div>
<div style="left:713px;top:1932px;width:2537px;height:2px;background:#d4d4d4;"></div>
<div style="top:1894.64px;font-size:27px;line-height:27px;color:#000;white-space:nowrap;letter-spacing:0.2px;left:1180px;">Stellen kozijnen</div>
<div style="top:1894.64px;font-size:27px;line-height:27px;color:#000;white-space:nowrap;letter-spacing:0.2px;left:-912px;width:3000px;text-align:right;">6,000</div>
<svg style="position:absolute;left:2101px;top:1889px;" width="42" height="40" viewBox="0 0 42 40"><path fill-rule="evenodd" d="M1 1 H41 V4 L2 40 H1 Z M11 10 H19 L11 18 Z" fill="#fcc850"/><path d="M41 3.5 L2 39.5" stroke="#fff" stroke-width="1.8" stroke-dasharray="2.5 2"/><path d="M5 5 H33" stroke="#5a2a10" stroke-width="2.2" stroke-dasharray="2.2 3.2"/><path d="M4 9 V30" stroke="#5a2a10" stroke-width="2.2" stroke-dasharray="2.2 3.2"/></svg>
<div style="top:1894.64px;font-size:27px;line-height:27px;color:#000;white-space:nowrap;letter-spacing:0.2px;left:2171px;">st</div>
<div style="left:648px;top:1934px;width:63px;height:43px;background:#e4e4e4;"></div>
<div style="left:648px;top:1977px;width:63px;height:2px;background:linear-gradient(90deg,#e4e4e4,#a0a0a0 60%,#b8b8b8);"></div>
<div style="top:1941.25px;font-size:31.0px;line-height:31.0px;color:#111;white-space:nowrap;left:-820px;width:3000px;text-align:center;transform:scaleX(0.832258064516129);transform-origin:50% 0;">39</div>
<div style="left:713px;top:1977px;width:2537px;height:2px;background:#d4d4d4;"></div>
<div style="top:1939.64px;font-size:27px;line-height:27px;color:#000;white-space:nowrap;letter-spacing:0.2px;left:1180px;">Metselmortel</div>
<div style="top:1939.64px;font-size:27px;line-height:27px;color:#000;white-space:nowrap;letter-spacing:0.2px;left:-912px;width:3000px;text-align:right;">0,900</div>
<svg style="position:absolute;left:2101px;top:1934px;" width="42" height="40" viewBox="0 0 42 40"><path fill-rule="evenodd" d="M1 1 H41 V4 L2 40 H1 Z M11 10 H19 L11 18 Z" fill="#fcc850"/><path d="M41 3.5 L2 39.5" stroke="#fff" stroke-width="1.8" stroke-dasharray="2.5 2"/><path d="M5 5 H33" stroke="#5a2a10" stroke-width="2.2" stroke-dasharray="2.2 3.2"/><path d="M4 9 V30" stroke="#5a2a10" stroke-width="2.2" stroke-dasharray="2.2 3.2"/></svg>
<div style="top:1939.64px;font-size:27px;line-height:27px;color:#000;white-space:nowrap;letter-spacing:0.2px;left:2171px;">m3</div>
<div style="left:648px;top:1979px;width:63px;height:43px;background:#e4e4e4;"></div>
<div style="left:648px;top:2022px;width:63px;height:2px;background:linear-gradient(90deg,#e4e4e4,#a0a0a0 60%,#b8b8b8);"></div>
<div style="top:1986.25px;font-size:31.0px;line-height:31.0px;color:#111;white-space:nowrap;left:-820px;width:3000px;text-align:center;transform:scaleX(0.832258064516129);transform-origin:50% 0;">40</div>
<div style="left:713px;top:1979px;width:2537px;height:43px;background:#a9a9a9;"></div>
<div style="left:713px;top:2022px;width:2537px;height:2px;background:#d4d4d4;"></div>
<div style="top:1984.64px;font-size:27px;line-height:27px;color:#000;white-space:nowrap;font-weight:700;letter-spacing:-0.8px;left:922px;">22.72</div>
<div style="top:1984.64px;font-size:27px;line-height:27px;color:#000;white-space:nowrap;font-weight:700;letter-spacing:-0.8px;left:1117px;">2</div>
<div style="top:1984.64px;font-size:27px;line-height:27px;color:#000;white-space:nowrap;font-weight:700;letter-spacing:-0.8px;left:1167px;">Voegwerk</div>
<div style="top:1984.64px;font-size:27px;line-height:27px;color:#000;white-space:nowrap;font-weight:700;letter-spacing:-0.8px;left:-912px;width:3000px;text-align:right;">36,000</div>
<svg style="position:absolute;left:2101px;top:1979px;" width="42" height="40" viewBox="0 0 42 40"><path fill-rule="evenodd" d="M1 1 H41 V4 L2 40 H1 Z M11 10 H19 L11 18 Z" fill="#fcc850"/><path d="M41 3.5 L2 39.5" stroke="#fff" stroke-width="1.8" stroke-dasharray="2.5 2"/><path d="M5 5 H33" stroke="#5a2a10" stroke-width="2.2" stroke-dasharray="2.2 3.2"/><path d="M4 9 V30" stroke="#5a2a10" stroke-width="2.2" stroke-dasharray="2.2 3.2"/></svg>
<div style="top:1984.64px;font-size:27px;line-height:27px;color:#000;white-space:nowrap;font-weight:700;letter-spacing:-0.8px;left:2171px;">m2</div>
<div style="left:648px;top:2024px;width:63px;height:43px;background:#e4e4e4;"></div>
<div style="left:648px;top:2067px;width:63px;height:2px;background:linear-gradient(90deg,#e4e4e4,#a0a0a0 60%,#b8b8b8);"></div>
<div style="top:2031.25px;font-size:31.0px;line-height:31.0px;color:#111;white-space:nowrap;left:-820px;width:3000px;text-align:center;transform:scaleX(0.832258064516129);transform-origin:50% 0;">41</div>
<div style="left:713px;top:2067px;width:2537px;height:2px;background:#d4d4d4;"></div>
<div style="top:2029.64px;font-size:27px;line-height:27px;color:#000;white-space:nowrap;letter-spacing:0.2px;left:1180px;">Voegmortel</div>
<div style="top:2029.64px;font-size:27px;line-height:27px;color:#000;white-space:nowrap;letter-spacing:0.2px;left:-912px;width:3000px;text-align:right;">0,396</div>
<svg style="position:absolute;left:2101px;top:2024px;" width="42" height="40" viewBox="0 0 42 40"><path fill-rule="evenodd" d="M1 1 H41 V4 L2 40 H1 Z M11 10 H19 L11 18 Z" fill="#fcc850"/><path d="M41 3.5 L2 39.5" stroke="#fff" stroke-width="1.8" stroke-dasharray="2.5 2"/><path d="M5 5 H33" stroke="#5a2a10" stroke-width="2.2" stroke-dasharray="2.2 3.2"/><path d="M4 9 V30" stroke="#5a2a10" stroke-width="2.2" stroke-dasharray="2.2 3.2"/></svg>
<div style="top:2029.64px;font-size:27px;line-height:27px;color:#000;white-space:nowrap;letter-spacing:0.2px;left:2171px;">m3</div>
<div style="left:648px;top:2069px;width:63px;height:43px;background:#e4e4e4;"></div>
<div style="left:648px;top:2112px;width:63px;height:2px;background:linear-gradient(90deg,#e4e4e4,#a0a0a0 60%,#b8b8b8);"></div>
<div style="top:2076.25px;font-size:31.0px;line-height:31.0px;color:#111;white-space:nowrap;left:-820px;width:3000px;text-align:center;transform:scaleX(0.832258064516129);transform-origin:50% 0;">42</div>
<div style="left:713px;top:2112px;width:2537px;height:2px;background:#d4d4d4;"></div>
<div style="top:2074.64px;font-size:27px;line-height:27px;color:#000;white-space:nowrap;letter-spacing:0.2px;left:1180px;">Voegwerk</div>
<div style="top:2074.64px;font-size:27px;line-height:27px;color:#000;white-space:nowrap;letter-spacing:0.2px;left:-912px;width:3000px;text-align:right;">36,000</div>
<svg style="position:absolute;left:2101px;top:2069px;" width="42" height="40" viewBox="0 0 42 40"><path fill-rule="evenodd" d="M1 1 H41 V4 L2 40 H1 Z M11 10 H19 L11 18 Z" fill="#fcc850"/><path d="M41 3.5 L2 39.5" stroke="#fff" stroke-width="1.8" stroke-dasharray="2.5 2"/><path d="M5 5 H33" stroke="#5a2a10" stroke-width="2.2" stroke-dasharray="2.2 3.2"/><path d="M4 9 V30" stroke="#5a2a10" stroke-width="2.2" stroke-dasharray="2.2 3.2"/></svg>
<div style="top:2074.64px;font-size:27px;line-height:27px;color:#000;white-space:nowrap;letter-spacing:0.2px;left:2171px;">m2</div>
<div style="left:648px;top:2114px;width:63px;height:43px;background:#e4e4e4;"></div>
<div style="left:648px;top:2157px;width:63px;height:2px;background:linear-gradient(90deg,#e4e4e4,#a0a0a0 60%,#b8b8b8);"></div>
<div style="top:2121.25px;font-size:31.0px;line-height:31.0px;color:#111;white-space:nowrap;left:-820px;width:3000px;text-align:center;transform:scaleX(0.832258064516129);transform-origin:50% 0;">43</div>
<div style="left:713px;top:2157px;width:2537px;height:2px;background:#d4d4d4;"></div>
<div style="top:2119.64px;font-size:27px;line-height:27px;color:#000;white-space:nowrap;letter-spacing:0.2px;left:1180px;">Zoutzuur</div>
<div style="top:2119.64px;font-size:27px;line-height:27px;color:#000;white-space:nowrap;letter-spacing:0.2px;left:-912px;width:3000px;text-align:right;">7,200</div>
<svg style="position:absolute;left:2101px;top:2114px;" width="42" height="40" viewBox="0 0 42 40"><path fill-rule="evenodd" d="M1 1 H41 V4 L2 40 H1 Z M11 10 H19 L11 18 Z" fill="#fcc850"/><path d="M41 3.5 L2 39.5" stroke="#fff" stroke-width="1.8" stroke-dasharray="2.5 2"/><path d="M5 5 H33" stroke="#5a2a10" stroke-width="2.2" stroke-dasharray="2.2 3.2"/><path d="M4 9 V30" stroke="#5a2a10" stroke-width="2.2" stroke-dasharray="2.2 3.2"/></svg>
<div style="top:2119.64px;font-size:27px;line-height:27px;color:#000;white-space:nowrap;letter-spacing:0.2px;left:2171px;">ltr</div>
<div style="left:648px;top:2159px;width:63px;height:43px;background:#e4e4e4;"></div>
<div style="left:648px;top:2202px;width:63px;height:2px;background:linear-gradient(90deg,#e4e4e4,#a0a0a0 60%,#b8b8b8);"></div>
<div style="top:2166.25px;font-size:31.0px;line-height:31.0px;color:#111;white-space:nowrap;left:-820px;width:3000px;text-align:center;transform:scaleX(0.832258064516129);transform-origin:50% 0;">44</div>
<div style="left:713px;top:2202px;width:2537px;height:2px;background:#d4d4d4;"></div>
<div style="top:2164.64px;font-size:27px;line-height:27px;color:#000;white-space:nowrap;letter-spacing:0.2px;left:1180px;">Doorstrijken binnenzijde</div>
<div style="top:2164.64px;font-size:27px;line-height:27px;color:#000;white-space:nowrap;letter-spacing:0.2px;left:-912px;width:3000px;text-align:right;">36,000</div>
<svg style="position:absolute;left:2101px;top:2159px;" width="42" height="40" viewBox="0 0 42 40"><path fill-rule="evenodd" d="M1 1 H41 V4 L2 40 H1 Z M11 10 H19 L11 18 Z" fill="#fcc850"/><path d="M41 3.5 L2 39.5" stroke="#fff" stroke-width="1.8" stroke-dasharray="2.5 2"/><path d="M5 5 H33" stroke="#5a2a10" stroke-width="2.2" stroke-dasharray="2.2 3.2"/><path d="M4 9 V30" stroke="#5a2a10" stroke-width="2.2" stroke-dasharray="2.2 3.2"/></svg>
<div style="top:2164.64px;font-size:27px;line-height:27px;color:#000;white-space:nowrap;letter-spacing:0.2px;left:2171px;">m2</div>
<div style="left:912px;top:494px;width:2px;height:1710px;background:#d4d4d4;"></div>
<div style="left:1107px;top:494px;width:2px;height:1710px;background:#d4d4d4;"></div>
<div style="left:1144px;top:494px;width:2px;height:1710px;background:#d4d4d4;"></div>
<div style="left:1825px;top:494px;width:2px;height:1710px;background:#d4d4d4;"></div>
<div style="left:2101px;top:494px;width:2px;height:1710px;background:#d4d4d4;"></div>
<div style="left:2163px;top:494px;width:2px;height:1710px;background:#d4d4d4;"></div>
<div style="left:2250px;top:494px;width:2px;height:1710px;background:#d4d4d4;"></div>
<div style="left:2450px;top:494px;width:2px;height:1710px;background:#d4d4d4;"></div>
<div style="left:2650px;top:494px;width:2px;height:1710px;background:#d4d4d4;"></div>
<div style="left:2850px;top:494px;width:2px;height:1710px;background:#d4d4d4;"></div>
<div style="left:3050px;top:494px;width:2px;height:1710px;background:#d4d4d4;"></div>
<div style="left:3250px;top:494px;width:2px;height:1710px;background:#d4d4d4;"></div>
<div style="left:711px;top:494px;width:2px;height:1710px;background:#a9a9a9;"></div>
<div style="left:709px;top:1124px;width:5px;height:44px;background:#1e7a46;"></div>
<svg style="position:absolute;left:1826px;top:1150px;" width="44" height="18" viewBox="0 0 44 18"><rect x="1" y="1" width="11" height="11" fill="#fff" stroke="#333" stroke-width="2"/><path d="M17 17 L30 6 L43 17 Z" fill="#e9b15a"/><rect x="28" y="8" width="10" height="6" fill="#3d77b6"/></svg>
<div style="left:2251px;top:1124px;width:199px;height:44px;border:4px solid #0000ff;box-sizing:border-box;"></div>
<div style="left:3778px;top:399px;width:48px;height:1805px;background:#e6e6e6;"></div>
<div style="left:3777px;top:493px;width:3px;height:1710px;background:#9a9a9a;"></div>
<div style="left:3784px;top:408px;width:37px;height:1796px;background:#dadada;"></div>
<div style="left:3778px;top:397px;width:48px;height:11px;background:#e6e6e6;border:2px solid #a8a8a8;border-right:none;box-sizing:border-box;"></div>
<div style="left:3785px;top:410px;width:37px;height:37px;background:#fff;border:2px solid #a8a8a8;box-sizing:border-box;"></div>
<svg style="position:absolute;left:3792px;top:423px;" width="23" height="12" viewBox="0 0 23 12"><path d="M1 11 L11.5 1 L22 11 Z" fill="#7b7b7b"/></svg>
<div style="left:3785px;top:580px;width:37px;height:847px;background:#fff;border:2px solid #a8a8a8;box-sizing:border-box;"></div>
<div style="left:3788px;top:2164px;width:37px;height:38px;background:#fff;border:2px solid #a8a8a8;box-sizing:border-box;"></div>
<svg style="position:absolute;left:3795px;top:2176px;" width="23" height="13" viewBox="0 0 23 13"><path d="M1 1 L22 1 L11.5 12 Z" fill="#7b7b7b"/></svg>
<div style="left:645px;top:2202px;width:3181px;height:2px;background:#f4f4f4;"></div>
<div style="left:0px;top:2204px;width:3826px;height:3px;background:#a0a0a0;"></div>
<div style="left:0px;top:2207px;width:3826px;height:53px;background:#efefef;"></div>
<div style="left:0px;top:2207px;width:3529px;height:53px;background:#415c5c;"></div>
<svg style="position:absolute;left:0px;top:2220px;" width="36" height="38" viewBox="0 0 36 38"><path d="M0 2 H26 L35 11 V37 H0 Z" fill="#f2f2f2"/><rect x="15" y="6" width="5" height="5" fill="#415c5c"/><rect x="4" y="16" width="27" height="5" fill="#415c5c"/><rect x="9" y="25" width="17" height="5" fill="#415c5c"/></svg>
<div style="top:2224.75px;font-size:31.0px;line-height:31.0px;color:#e8ecec;white-space:nowrap;left:485px;transform:scaleX(0.8488742731303502);transform-origin:0 0;">YasperKuiper</div>
<div style="top:2224.75px;font-size:31.0px;line-height:31.0px;color:#e8ecec;white-space:nowrap;left:663.5px;transform:scaleX(0.870753940744676);transform-origin:0 0;">XTB</div>
<div style="top:2224.75px;font-size:31.0px;line-height:31.0px;color:#e8ecec;white-space:nowrap;left:740px;transform:scaleX(0.8784849953330485);transform-origin:0 0;">EUR</div>
<div style="top:2224.75px;font-size:31.0px;line-height:31.0px;color:#e8ecec;white-space:nowrap;left:820px;transform:scaleX(0.861614723250578);transform-origin:0 0;">Uurloon: € 45,00</div>
<div style="top:2224.75px;font-size:31.0px;line-height:31.0px;color:#e8ecec;white-space:nowrap;left:1039px;transform:scaleX(0.8628308196102478);transform-origin:0 0;">Vorig totaal: € 46.027,40</div>
<div style="top:2224.75px;font-size:31.0px;line-height:31.0px;color:#e8ecec;white-space:nowrap;left:1352.5px;transform:scaleX(0.8635136669338317);transform-origin:0 0;">Actueel totaal: € 46.027,40</div>
<div style="top:2224.75px;font-size:31.0px;line-height:31.0px;color:#e8ecec;white-space:nowrap;left:1695px;transform:scaleX(0.8654169038257887);transform-origin:0 0;">Subtotaal: € 40.176,39</div>
<div style="top:2224.75px;font-size:31.0px;line-height:31.0px;color:#e8ecec;white-space:nowrap;left:1987px;transform:scaleX(0.8554880052105317);transform-origin:0 0;">Aantal uren: 648,81</div>
<div style="top:2224.75px;font-size:31.0px;line-height:31.0px;color:#e8ecec;white-space:nowrap;left:2242px;transform:scaleX(0.8499971068387497);transform-origin:0 0;">Bruto totaal CO2: 189,52</div>
<div style="top:2224.75px;font-size:31.0px;line-height:31.0px;color:#e8ecec;white-space:nowrap;left:2556px;transform:scaleX(0.8594200245358503);transform-origin:0 0;">Bruto totaal MKI: 24,91</div>
<div style="top:2224.75px;font-size:31.0px;line-height:31.0px;color:#e8ecec;white-space:nowrap;left:2852px;transform:scaleX(0.8345510957026572);transform-origin:0 0;">MPG-score:</div>
<div style="top:2224.75px;font-size:31.0px;line-height:31.0px;color:#e8ecec;white-space:nowrap;left:3032px;transform:scaleX(0.8569116705191495);transform-origin:0 0;">Regels: 76</div>
<div style="top:2224.75px;font-size:31.0px;line-height:31.0px;color:#e8ecec;white-space:nowrap;left:3183px;transform:scaleX(0.8445356086482313);transform-origin:0 0;">Levensfases</div>
<div style="left:1267px;top:1072px;width:412px;height:1050px;background:#ffffff;border:2px solid #c8c8c8;box-sizing:border-box;"></div>
<div style="left:1269px;top:1074px;width:408px;height:1046px;border:2.7px solid #737373;box-sizing:border-box;"></div>
<div style="left:1292px;top:1110px;width:32px;height:32px;background:#fff;border:2.5px solid #a6a6a6;box-sizing:border-box;"></div>
<div style="top:1110.25px;font-size:31.0px;line-height:31.0px;color:#6a6a6a;white-space:nowrap;left:1340px;transform:scaleX(0.8424416745365871);transform-origin:0 0;">A1 t/m A3</div>
<div style="left:1292px;top:1175px;width:32px;height:32px;background:#fff;border:2.5px solid #a6a6a6;box-sizing:border-box;"></div>
<div style="top:1175.25px;font-size:31.0px;line-height:31.0px;color:#6a6a6a;white-space:nowrap;left:1340px;transform:scaleX(0.8424416745365871);transform-origin:0 0;">A4</div>
<div style="left:1292px;top:1240px;width:32px;height:32px;background:#fff;border:2.5px solid #a6a6a6;box-sizing:border-box;"></div>
<div style="top:1240.25px;font-size:31.0px;line-height:31.0px;color:#6a6a6a;white-space:nowrap;left:1340px;transform:scaleX(0.8424416745365871);transform-origin:0 0;">A5</div>
<div style="left:1292px;top:1305px;width:32px;height:32px;background:#fff;border:2.5px solid #a6a6a6;box-sizing:border-box;"></div>
<div style="top:1305.25px;font-size:31.0px;line-height:31.0px;color:#6a6a6a;white-space:nowrap;left:1340px;transform:scaleX(0.8424416745365871);transform-origin:0 0;">B1</div>
<div style="left:1292px;top:1370px;width:32px;height:32px;background:#fff;border:2.5px solid #a6a6a6;box-sizing:border-box;"></div>
<div style="top:1370.25px;font-size:31.0px;line-height:31.0px;color:#6a6a6a;white-space:nowrap;left:1340px;transform:scaleX(0.8424416745365871);transform-origin:0 0;">B2</div>
<div style="left:1292px;top:1435px;width:32px;height:32px;background:#fff;border:2.5px solid #a6a6a6;box-sizing:border-box;"></div>
<div style="top:1435.25px;font-size:31.0px;line-height:31.0px;color:#6a6a6a;white-space:nowrap;left:1340px;transform:scaleX(0.8424416745365871);transform-origin:0 0;">B3</div>
<div style="left:1292px;top:1500px;width:32px;height:32px;background:#fff;border:2.5px solid #a6a6a6;box-sizing:border-box;"></div>
<svg style="position:absolute;left:1296px;top:1506px;" width="24" height="20" viewBox="0 0 24 20"><path d="M3 10 L9 17 L21 3" fill="none" stroke="#404040" stroke-width="4"/></svg>
<div style="top:1500.25px;font-size:31.0px;line-height:31.0px;color:#6a6a6a;white-space:nowrap;left:1340px;transform:scaleX(0.8424416745365871);transform-origin:0 0;">B4</div>
<div style="left:1292px;top:1565px;width:32px;height:32px;background:#fff;border:2.5px solid #a6a6a6;box-sizing:border-box;"></div>
<svg style="position:absolute;left:1296px;top:1571px;" width="24" height="20" viewBox="0 0 24 20"><path d="M3 10 L9 17 L21 3" fill="none" stroke="#404040" stroke-width="4"/></svg>
<div style="top:1565.25px;font-size:31.0px;line-height:31.0px;color:#6a6a6a;white-space:nowrap;left:1340px;transform:scaleX(0.8424416745365871);transform-origin:0 0;">B5</div>
<div style="left:1292px;top:1630px;width:32px;height:32px;background:#fff;border:2.5px solid #a6a6a6;box-sizing:border-box;"></div>
<svg style="position:absolute;left:1296px;top:1636px;" width="24" height="20" viewBox="0 0 24 20"><path d="M3 10 L9 17 L21 3" fill="none" stroke="#404040" stroke-width="4"/></svg>
<div style="top:1630.25px;font-size:31.0px;line-height:31.0px;color:#6a6a6a;white-space:nowrap;left:1340px;transform:scaleX(0.8424416745365871);transform-origin:0 0;">C1</div>
<div style="left:1292px;top:1695px;width:32px;height:32px;background:#fff;border:2.5px solid #a6a6a6;box-sizing:border-box;"></div>
<svg style="position:absolute;left:1296px;top:1701px;" width="24" height="20" viewBox="0 0 24 20"><path d="M3 10 L9 17 L21 3" fill="none" stroke="#404040" stroke-width="4"/></svg>
<div style="top:1695.25px;font-size:31.0px;line-height:31.0px;color:#6a6a6a;white-space:nowrap;left:1340px;transform:scaleX(0.8424416745365871);transform-origin:0 0;">C2</div>
<div style="left:1292px;top:1760px;width:32px;height:32px;background:#fff;border:2.5px solid #a6a6a6;box-sizing:border-box;"></div>
<svg style="position:absolute;left:1296px;top:1766px;" width="24" height="20" viewBox="0 0 24 20"><path d="M3 10 L9 17 L21 3" fill="none" stroke="#404040" stroke-width="4"/></svg>
<div style="top:1760.25px;font-size:31.0px;line-height:31.0px;color:#6a6a6a;white-space:nowrap;left:1340px;transform:scaleX(0.8424416745365871);transform-origin:0 0;">C3</div>
<div style="left:1292px;top:1825px;width:32px;height:32px;background:#fff;border:2.5px solid #a6a6a6;box-sizing:border-box;"></div>
<svg style="position:absolute;left:1296px;top:1831px;" width="24" height="20" viewBox="0 0 24 20"><path d="M3 10 L9 17 L21 3" fill="none" stroke="#404040" stroke-width="4"/></svg>
<div style="top:1825.25px;font-size:31.0px;line-height:31.0px;color:#6a6a6a;white-space:nowrap;left:1340px;transform:scaleX(0.8424416745365871);transform-origin:0 0;">C4</div>
<div style="left:1292px;top:1890px;width:32px;height:32px;background:#fff;border:2.5px solid #a6a6a6;box-sizing:border-box;"></div>
<svg style="position:absolute;left:1296px;top:1896px;" width="24" height="20" viewBox="0 0 24 20"><path d="M3 10 L9 17 L21 3" fill="none" stroke="#404040" stroke-width="4"/></svg>
<div style="top:1890.25px;font-size:31.0px;line-height:31.0px;color:#6a6a6a;white-space:nowrap;left:1340px;transform:scaleX(0.8424416745365871);transform-origin:0 0;">D</div>
<div style="left:1335px;top:1110px;width:134px;height:34px;border:2.5px dotted #222;box-sizing:border-box;"></div>
<div style="left:1292px;top:1971px;width:377px;height:55px;background:#fff;border:2.5px solid #adadad;box-sizing:border-box;"></div>
<div style="top:1982.75px;font-size:31.0px;line-height:31.0px;color:#555;white-space:nowrap;left:-17.5px;width:3000px;text-align:center;transform:scaleX(0.8822923846780474);transform-origin:50% 0;">Selecteer alle fases</div>
<div style="left:1292px;top:2043px;width:377px;height:55px;background:#fff;border:2.5px solid #adadad;box-sizing:border-box;"></div>
<div style="top:2055.75px;font-size:31.0px;line-height:31.0px;color:#555;white-space:nowrap;left:-17.5px;width:3000px;text-align:center;transform:scaleX(0.8894879220781701);transform-origin:50% 0;">Reset fases</div>
<div style="left:1677px;top:-3px;width:660px;height:1158px;background:#ffffff;border:2.5px solid #c0c0c0;box-sizing:border-box;"></div>
<div style="left:1682px;top:0px;width:650px;height:22px;background:#eeeeee;"></div>
<svg style="position:absolute;left:1995px;top:6px;" width="22" height="12" viewBox="0 0 22 12"><path d="M1 11 L11 1 L21 11 Z" fill="#111"/></svg>
<svg style="position:absolute;left:1692px;top:29px;" width="40" height="40" viewBox="0 0 40 40"><rect x="2" y="2" width="36" height="36" fill="#fff" stroke="#555" stroke-width="2.2"/><rect x="14" y="14" width="24" height="12" fill="#bfe2f5" stroke="#4a6a8a" stroke-width="1.5"/><path d="M2 26 H38 M14 2 V38 M26 2 V38" stroke="#555" stroke-width="1.8"/><path d="M0 4 L12 18 M12 4 L0 18" stroke="#d03a20" stroke-width="4.5"/></svg>
<div style="top:36.25px;font-size:31.0px;line-height:31.0px;color:#262626;white-space:nowrap;left:1765.5px;transform:scaleX(0.9309606766089202);transform-origin:0 0;">Regel verwijderen</div>
<div style="top:36.25px;font-size:31.0px;line-height:31.0px;color:#262626;white-space:nowrap;left:-725px;width:3000px;text-align:right;transform:scaleX(0.8118389098861867);transform-origin:100% 0;">F11</div>
<div style="left:1760px;top:79.25px;width:574px;height:2.5px;background:#a0a0a0;"></div>
<div style="top:98.75px;font-size:31.0px;line-height:31.0px;color:#262626;white-space:nowrap;left:1765.5px;transform:scaleX(0.9355883937336044);transform-origin:0 0;">Koppen</div>
<svg style="position:absolute;left:2306px;top:103.25px;" width="13" height="19" viewBox="0 0 13 19"><path d="M1.5 1 L11.5 9.5 L1.5 18 Z" fill="#444"/></svg>
<div style="top:153.75px;font-size:31.0px;line-height:31.0px;color:#262626;white-space:nowrap;left:1765.5px;transform:scaleX(0.9532786944226577);transform-origin:0 0;">Begrotingsregel</div>
<svg style="position:absolute;left:2306px;top:158.25px;" width="13" height="19" viewBox="0 0 13 19"><path d="M1.5 1 L11.5 9.5 L1.5 18 Z" fill="#444"/></svg>
<div style="top:208.75px;font-size:31.0px;line-height:31.0px;color:#262626;white-space:nowrap;left:1765.5px;transform:scaleX(0.9461505256550626);transform-origin:0 0;">Opslagposten</div>
<svg style="position:absolute;left:2306px;top:213.25px;" width="13" height="19" viewBox="0 0 13 19"><path d="M1.5 1 L11.5 9.5 L1.5 18 Z" fill="#444"/></svg>
<div style="top:263.75px;font-size:31.0px;line-height:31.0px;color:#262626;white-space:nowrap;left:1765.5px;transform:scaleX(0.9221509874641586);transform-origin:0 0;">Verzamelposten</div>
<svg style="position:absolute;left:2306px;top:268.25px;" width="13" height="19" viewBox="0 0 13 19"><path d="M1.5 1 L11.5 9.5 L1.5 18 Z" fill="#444"/></svg>
<div style="left:1760px;top:306.75px;width:574px;height:2.5px;background:#a0a0a0;"></div>
<svg style="position:absolute;left:1692px;top:320px;" width="40" height="38" viewBox="0 0 40 38"><rect x="0" y="0" width="18" height="17" fill="#3d77b6"/><rect x="20" y="0" width="18" height="17" fill="#3d77b6"/><rect x="0" y="19" width="18" height="18" fill="#3d77b6"/><rect x="20" y="19" width="18" height="18" fill="#3d77b6"/><path d="M4 8.5 H14 M9 3.5 V13.5 M24 8.5 H34 M24 25 H34 M24 31 H34 M5 24 L13 32 M13 24 L5 32" stroke="#fff" stroke-width="2.4"/></svg>
<div style="top:326.25px;font-size:31.0px;line-height:31.0px;color:#262626;white-space:nowrap;left:1765.5px;transform:scaleX(0.9284299791340864);transform-origin:0 0;">Regel deactiveren</div>
<svg style="position:absolute;left:1692px;top:374px;" width="41" height="41" viewBox="0 0 41 41"><rect x="11" y="1.5" width="19" height="9" fill="#fff" stroke="#777" stroke-width="2.2"/><rect x="8" y="8" width="25" height="10" fill="#3d77b6"/><path d="M0 11 H6 V21 H34 V11 H40 V30 H0 Z" fill="#777"/><rect x="2.5" y="23" width="5" height="3.5" fill="#fff"/><rect x="11" y="27" width="19" height="12" fill="#fff" stroke="#777" stroke-width="2.2"/><rect x="15" y="32" width="11" height="2" fill="#7aa0d0"/></svg>
<div style="top:381.25px;font-size:31.0px;line-height:31.0px;color:#262626;white-space:nowrap;left:1765.5px;transform:scaleX(0.9460174922019222);transform-origin:0 0;">Regel niet afdrukken</div>
<div style="left:1760px;top:424.25px;width:574px;height:2.5px;background:#a0a0a0;"></div>
<svg style="position:absolute;left:1694px;top:439px;" width="37" height="37" viewBox="0 0 37 37"><path d="M18 1 L35 8 V27 L18 35 L1 27 V8 Z" fill="#d24a30"/><path d="M18 7 L29 11 L18 15 L7 11 Z" fill="#fff"/><path d="M21 19 L30 15 V26 L21 30 Z" fill="#fff"/></svg>
<div style="top:443.75px;font-size:31.0px;line-height:31.0px;color:#262626;white-space:nowrap;left:1765.5px;transform:scaleX(0.9608652445134632);transform-origin:0 0;">Hoeveelheid niet afdrukken</div>
<svg style="position:absolute;left:1693px;top:493px;" width="40" height="40" viewBox="0 0 40 40"><path d="M1 2 H16 L39 25 L25 39 L1 15 Z" fill="#d24a30"/><circle cx="9" cy="9" r="3" fill="#fff"/><path d="M27 17 Q17 18 19 28 M18 21 H26 M19 25 H27" stroke="#fff" stroke-width="2.5" fill="none"/></svg>
<div style="top:498.75px;font-size:31.0px;line-height:31.0px;color:#262626;white-space:nowrap;left:1765.5px;transform:scaleX(0.9663836896428362);transform-origin:0 0;">Norm en bedrag niet afdrukken</div>
<svg style="position:absolute;left:1695px;top:552px;" width="36" height="29" viewBox="0 0 36 29"><rect x="0" y="0" width="35" height="4" fill="#aaa"/><rect x="10" y="7" width="25" height="4" fill="#aaa"/><rect x="10" y="14" width="25" height="4" fill="#aaa"/><rect x="0" y="23" width="35" height="5" fill="#aaa"/><path d="M7 7 V18 L1 12.5 Z" fill="#aaa"/></svg>
<div style="top:553.75px;font-size:31.0px;line-height:31.0px;color:#b8b8b8;white-space:nowrap;left:1765.5px;transform:scaleX(0.9777941875181934);transform-origin:0 0;">Onderbouwing niet afdrukken</div>
<svg style="position:absolute;left:1695px;top:600px;" width="38" height="38" viewBox="0 0 38 38"><text x="1" y="34" font-family="Liberation Serif" font-weight="700" font-size="45" fill="#505050">B</text></svg>
<div style="top:608.75px;font-size:31.0px;line-height:31.0px;color:#262626;white-space:nowrap;left:1765.5px;transform:scaleX(0.9393561081098235);transform-origin:0 0;">Regel vet afdrukken</div>
<div style="left:1760px;top:651.75px;width:574px;height:2.5px;background:#a0a0a0;"></div>
<svg style="position:absolute;left:1695px;top:670px;" width="36" height="29" viewBox="0 0 36 29"><rect x="0" y="0" width="35" height="4" fill="#aaa"/><rect x="10" y="7" width="25" height="4" fill="#aaa"/><rect x="10" y="14" width="25" height="4" fill="#aaa"/><rect x="0" y="23" width="35" height="5" fill="#aaa"/><path d="M7 7 V18 L1 12.5 Z" fill="#aaa"/></svg>
<div style="top:671.25px;font-size:31.0px;line-height:31.0px;color:#b8b8b8;white-space:nowrap;left:1765.5px;transform:scaleX(0.9336566957870193);transform-origin:0 0;">Element vaste eenheidsprijs</div>
<div style="left:1760px;top:714.25px;width:574px;height:2.5px;background:#a0a0a0;"></div>
<div style="top:733.75px;font-size:31.0px;line-height:31.0px;color:#262626;white-space:nowrap;left:1765.5px;transform:scaleX(0.9343081982685125);transform-origin:0 0;">Langtekst</div>
<div style="top:733.75px;font-size:31.0px;line-height:31.0px;color:#262626;white-space:nowrap;left:-725px;width:3000px;text-align:right;transform:scaleX(0.894789357646876);transform-origin:100% 0;">SHIFT+F8</div>
<svg style="position:absolute;left:1692px;top:782px;" width="40" height="40" viewBox="0 0 40 40"><rect x="2" y="3" width="28" height="33" fill="#fff" stroke="#555" stroke-width="2.2"/><rect x="1" y="1" width="30" height="6" fill="#3d77b6"/><rect x="7" y="12" width="4" height="2" fill="#555"/><rect x="13" y="12" width="12" height="2" fill="#888"/><rect x="7" y="17" width="4" height="2" fill="#555"/><rect x="13" y="17" width="12" height="2" fill="#888"/><rect x="7" y="22" width="4" height="2" fill="#555"/><rect x="13" y="22" width="12" height="2" fill="#888"/><rect x="7" y="27" width="4" height="2" fill="#555"/><rect x="13" y="27" width="12" height="2" fill="#888"/><rect x="7" y="32" width="4" height="2" fill="#555"/><rect x="13" y="32" width="12" height="2" fill="#888"/><path d="M13 36 L17 28 L33 12 L38 17 L22 33 Z" fill="#3d77b6" stroke="#fff" stroke-width="1.5"/></svg>
<div style="top:788.75px;font-size:31.0px;line-height:31.0px;color:#262626;white-space:nowrap;left:1765.5px;transform:scaleX(0.9588903367747456);transform-origin:0 0;">Codelijst</div>
<div style="top:788.75px;font-size:31.0px;line-height:31.0px;color:#262626;white-space:nowrap;left:-725px;width:3000px;text-align:right;transform:scaleX(0.9224834524793107);transform-origin:100% 0;">ALT+F5</div>
<svg style="position:absolute;left:1692px;top:837px;" width="42" height="41" viewBox="0 0 42 41"><path d="M14 4 Q21 -1 28 4 V12 H14 Z" fill="#3d77b6"/><rect x="16" y="11" width="11" height="10" fill="#fff" stroke="#3d77b6" stroke-width="2"/><path d="M10 26 Q2 30 1 36 H10 Z" fill="#3d77b6"/><ellipse cx="30" cy="25" rx="11" ry="4" fill="#e9b15a"/><ellipse cx="30" cy="31" rx="11" ry="4" fill="#e9b15a"/><ellipse cx="30" cy="37" rx="11" ry="3.5" fill="#e9b15a"/></svg>
<div style="top:843.75px;font-size:31.0px;line-height:31.0px;color:#262626;white-space:nowrap;left:1765.5px;transform:scaleX(0.9784436630484635);transform-origin:0 0;">Uurlooncode</div>
<div style="top:843.75px;font-size:31.0px;line-height:31.0px;color:#262626;white-space:nowrap;left:-725px;width:3000px;text-align:right;transform:scaleX(0.8568750836792074);transform-origin:100% 0;">F5</div>
<div style="left:1760px;top:886.75px;width:574px;height:2.5px;background:#a0a0a0;"></div>
<svg style="position:absolute;left:1692px;top:900px;" width="40" height="40" viewBox="0 0 40 40"><g transform="scale(0.49)"><rect x="13" y="0" width="67" height="14" fill="#86d5cf"/><rect x="0" y="0" width="14" height="14" fill="#f07a62"/><rect x="0" y="14" width="14" height="15" fill="#86d5cf"/><rect x="13" y="18" width="53" height="13" fill="#86d5cf"/><rect x="0" y="29" width="14" height="15" fill="#e000e8"/><rect x="13" y="44" width="40" height="14" fill="#86d5cf"/><rect x="13" y="63" width="15" height="16" rx="4" fill="#86d5cf"/><rect x="37" y="63" width="15" height="16" rx="4" fill="#86d5cf"/></g></svg>
<div style="top:906.25px;font-size:31.0px;line-height:31.0px;color:#262626;white-space:nowrap;left:1765.5px;transform:scaleX(0.9365997757330082);transform-origin:0 0;">Ibis Artikelen Service</div>
<div style="top:906.25px;font-size:31.0px;line-height:31.0px;color:#262626;white-space:nowrap;left:-725px;width:3000px;text-align:right;transform:scaleX(0.9224834524793107);transform-origin:100% 0;">ALT+F6</div>
<div style="left:1760px;top:949.25px;width:574px;height:2.5px;background:#a0a0a0;"></div>
<svg style="position:absolute;left:1692px;top:962px;" width="40" height="40" viewBox="0 0 40 40"><g fill="none" stroke="#3d77b6" stroke-width="4"><rect x="2" y="14" width="20" height="12" rx="6" transform="rotate(-45 12 20)"/><rect x="14" y="6" width="20" height="12" rx="6" transform="rotate(-45 24 12)"/></g><circle cx="29" cy="30" r="9" fill="#d24a30"/><path d="M25 26 L33 34 M33 26 L25 34" stroke="#fff" stroke-width="2.2"/></svg>
<div style="top:968.75px;font-size:31.0px;line-height:31.0px;color:#262626;white-space:nowrap;left:1765.5px;transform:scaleX(0.9791326365297446);transform-origin:0 0;">Milieukaart ontkoppelen</div>
<div style="top:968.75px;font-size:31.0px;line-height:31.0px;color:#262626;white-space:nowrap;left:-725px;width:3000px;text-align:right;transform:scaleX(0.9400907359723338);transform-origin:100% 0;">CTRL+M</div>
<div style="left:1760px;top:1011.75px;width:574px;height:2.5px;background:#a0a0a0;"></div>
<svg style="position:absolute;left:1692px;top:1025px;" width="40" height="40" viewBox="0 0 40 40"><g fill="none" stroke="#3d77b6" stroke-width="4"><rect x="2" y="14" width="20" height="12" rx="6" transform="rotate(-45 12 20)"/><rect x="14" y="6" width="20" height="12" rx="6" transform="rotate(-45 24 12)"/></g><circle cx="29" cy="30" r="9" fill="#d24a30"/><path d="M25 26 L33 34 M33 26 L25 34" stroke="#fff" stroke-width="2.2"/></svg>
<div style="top:1031.25px;font-size:31.0px;line-height:31.0px;color:#262626;white-space:nowrap;left:1765.5px;transform:scaleX(0.9791326365297446);transform-origin:0 0;">Milieukaart ontkoppelen</div>
<div style="top:1031.25px;font-size:31.0px;line-height:31.0px;color:#262626;white-space:nowrap;left:-725px;width:3000px;text-align:right;transform:scaleX(0.9400907359723338);transform-origin:100% 0;">CTRL+M</div>
<div style="left:1682px;top:1071.75px;width:650px;height:54px;background:#daf4f4;"></div>
<div style="left:2292px;top:1071.75px;width:40px;height:54px;background:#b5efec;"></div>
<svg style="position:absolute;left:1697px;top:1085px;" width="32" height="34" viewBox="0 0 32 34"><rect x="0" y="14" width="8" height="19" fill="#3d77b6"/><rect x="12" y="0" width="8" height="33" fill="#e9b15a"/><rect x="22" y="8" width="9" height="25" fill="#d24a30"/></svg>
<div style="top:1086.25px;font-size:31.0px;line-height:31.0px;color:#262626;white-space:nowrap;left:1765.5px;transform:scaleX(0.8244560494629208);transform-origin:0 0;">Fases</div>
<svg style="position:absolute;left:2306px;top:1090.75px;" width="13" height="19" viewBox="0 0 13 19"><path d="M1.5 1 L11.5 9.5 L1.5 18 Z" fill="#444"/></svg>
</div></body></html>
